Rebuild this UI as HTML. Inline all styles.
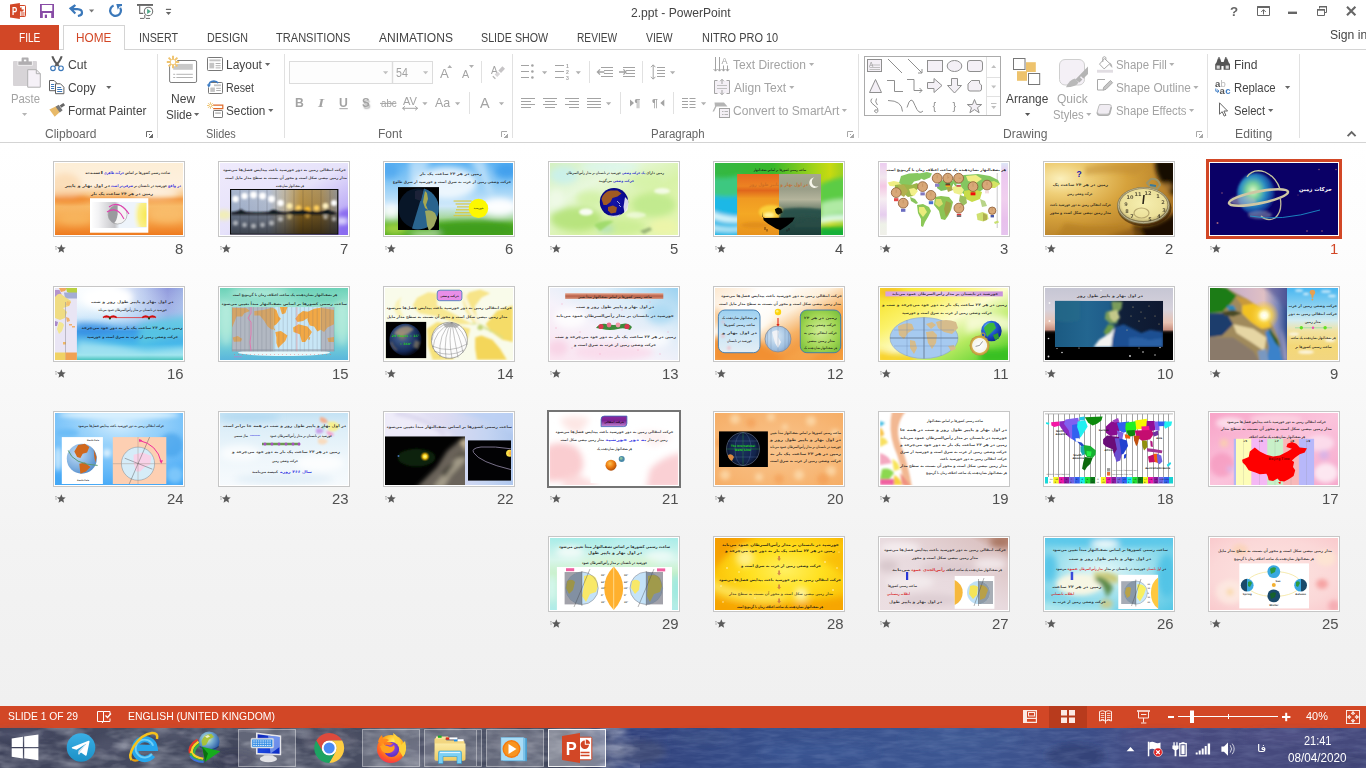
<!DOCTYPE html>
<html lang="en">
<head>
<meta charset="utf-8">
<title>2.ppt - PowerPoint</title>
<style>
html,body{margin:0;padding:0;width:1366px;height:768px;overflow:hidden;background:#fff}
body{position:relative;font-family:"Liberation Sans",sans-serif;color:#444}
#titlebar{position:absolute;left:0;top:0;width:1366px;height:25px;background:#fff}
#tabs{position:absolute;left:0;top:25px;width:1366px;height:25px;background:#fff}
#tabs .line{position:absolute;left:0;top:24px;width:1366px;height:1px;background:#d4d4d4}
#filetab{position:absolute;left:0;top:0;width:59px;height:25px;background:#d24726}
#hometab{position:absolute;left:63px;top:0;width:60px;height:25px;background:#fff;border:1px solid #d4d4d4;border-bottom:none}
#ribbon{position:absolute;left:0;top:50px;width:1366px;height:92px;background:#fff;border-bottom:1px solid #d4d4d4}
#sorter{position:absolute;left:0;top:143px;width:1366px;height:563px;background:linear-gradient(#fff 0,#fdfdfd 100px,#f8f8f8 250px,#f3f3f3 400px,#f0f0f0 563px)}
#status{position:absolute;left:0;top:706px;width:1366px;height:22px;background:#d24726}
#taskbar{position:absolute;left:0;top:728px;width:1366px;height:40px;background:#3a3d5e;overflow:hidden}
.t{position:absolute;white-space:nowrap;line-height:1;transform-origin:0 0;display:block}
svg{position:absolute;left:0;top:0;overflow:visible}
.th{position:absolute;width:130px;height:74px;border:1px solid #c6c6c6;background:#fff}
.th svg{left:1px;top:1px;overflow:hidden}
.th.hov{border:2px solid #747474;margin:-1px 0 0 -1px}
.th.sel{border:3px solid #d24726;margin:-2px 0 0 -2px}
</style>
</head>
<body>
<div id="titlebar"></div>
<div id="tabs"><div class="line"></div><div id="filetab"></div><div id="hometab"></div></div>
<div id="ribbon"></div>
<div id="sorter"></div>
<div id="status"></div>
<div id="taskbar"></div>

<svg id="chrome-top" style="will-change:transform" width="1366" height="143" viewBox="0 0 1366 143" font-family="Liberation Sans, sans-serif">
<defs>
<path id="dd" d="M0 0h5.2l-2.6 3z"/>
<g id="dlg"><path d="M0.5 6V0.5H6" fill="none" stroke-width="1"/><path d="M3 3h1v1H3zM6 3h1v4H3V6h1V5h1V4h1z" stroke="none"/></g>
</defs>
<!-- ===== quick access toolbar ===== -->
<g id="ic-ppt">
<path d="M19.400 5.500h5.400q.7 0 .7.700v9.600q0 .7-.7.700h-5.400z" fill="#fff" stroke="#d24726" stroke-width="1"/>
<path d="M10 4.400L19.900 2.900v16L10 17.600z" fill="#d24726"/>
<path d="M21.600 7.200a2.300 2.300 0 1 0 2.300 2.300h-2.300z" fill="#d24726"/>
<path d="M20.600 13h4M20.600 15h4" stroke="#d24726" stroke-width="1"/>
<text x="12.100" y="14.600" font-size="10.400" font-weight="bold" fill="#fff" textLength="5.200" lengthAdjust="spacingAndGlyphs">P</text>
</g>
<g id="ic-save">
<path d="M40 4h14v14H40z" fill="#884ca6"/>
<path d="M41.800 5h10.500v6H41.800z" fill="#fff"/>
<path d="M42.800 13h8.400v5h-8.400z" fill="#fff"/>
<path d="M44.800 14.600h2.200V18h-2.200z" fill="#884ca6"/>
</g>
<g id="ic-undo">
<path d="M74.600 4.300l1.500 1.500-2.400 2.300h3.800q5.600.3 5.600 4.600 0 3.700-5 4.300l-.4-2.100q3.200-.5 3.200-2.300 0-2.200-3.500-2.300h-3.700l2.400 2.400-1.500 1.500-5.800-5.900z" fill="#3b78ba"/>
</g>
<use href="#dd" x="89" y="9.4" fill="#777"/>
<g id="ic-redo"><path d="M113.600 5.500A5.400 5.400 0 1 0 120.200 7.800" fill="none" stroke="#3b78ba" stroke-width="2.200"/><path d="M116.300 4h5.700v2l-2.400.4-1.800 3.400z" fill="#3b78ba"/></g>
<g id="ic-show">
<path d="M137 4h16v1.900h-16z" fill="#666"/>
<path d="M139.700 5.500v7.900h3.600" fill="none" stroke="#666" stroke-width="1.100"/>
<path d="M144.800 15v3.400M140 18.400h4M146 18.400h4" stroke="#666" stroke-width="1"/>
<circle cx="148.500" cy="11.400" r="4.200" fill="#fff" stroke="#777" stroke-width="1.100"/>
<path d="M147.100 8.800l3.900 2.600-3.900 2.600z" fill="#4fa888"/>
</g>
<g id="ic-qat" fill="#666"><path d="M165.900 8.800h5.200v1.200h-5.200z"/><path d="M165.900 12h5.200l-2.600 3z"/></g>
<!-- ===== window controls ===== -->
<g id="ic-win" fill="none" stroke="#666">
<path d="M1257.5 6.5h12v9h-12z" stroke-width="1"/><path d="M1257 7.2h13" stroke-width="1.6"/>
<path d="M1263.5 14.5V9.8M1261.2 12l2.3-2.3 2.3 2.3" stroke-width="1"/>
<path d="M1288 12.8h9" stroke-width="2.4"/>
<path d="M1319.5 8.5v-2h7v6h-2" stroke-width="1"/><path d="M1319 6.8h8" stroke-width="1.4"/>
<path d="M1317.5 9.5h7v6h-7z" stroke-width="1"/><path d="M1317 9.9h8" stroke-width="1.6"/>
<path d="M1347 6.8l8.4 8.4M1355.4 6.8l-8.4 8.4" stroke-width="2.1"/>
</g>
<!-- ===== group separators ===== -->
<g fill="#e1e1e1">
<rect x="157" y="54" width="1" height="84"/><rect x="284" y="54" width="1" height="84"/>
<rect x="512" y="54" width="1" height="84"/><rect x="858" y="54" width="1" height="84"/>
<rect x="1207" y="54" width="1" height="84"/><rect x="1299" y="54" width="1" height="84"/>
<rect x="481" y="61" width="1" height="22"/><rect x="589" y="61" width="1" height="22"/><rect x="642" y="61" width="1" height="22"/>
<rect x="469" y="92" width="1" height="22"/><rect x="620" y="92" width="1" height="22"/><rect x="673" y="92" width="1" height="22"/>
</g>
<use href="#dlg" x="146" y="131" fill="#6a6a6a" stroke="#6a6a6a"/><use href="#dlg" x="501" y="131" fill="#a8a8a8" stroke="#a8a8a8"/><use href="#dlg" x="847" y="131" fill="#a8a8a8" stroke="#a8a8a8"/><use href="#dlg" x="1196" y="131" fill="#a8a8a8" stroke="#a8a8a8"/>
<path d="M1347.6 136.2l4-4 4 4" fill="none" stroke="#666" stroke-width="1.9"/>
<!-- ===== clipboard ===== -->
<g id="ic-paste">
<path d="M14 61h22q1 0 1 1v23q0 1-1 1H14q-1 0-1-1V62q0-1 1-1z" fill="#d7d4d7"/>
<path d="M17.600 61h15v4.600h-15z" fill="#fff"/>
<path d="M18.300 61.400h13.600v3.500H18.300z" fill="#b0aeb0"/><path d="M21.600 58.400q0-.8.800-.8h5.400q.8 0 .8.800v3.600h-7z" fill="#b0aeb0"/><path d="M23.900 59.600h2.400v1.700h-2.400z" fill="#fff"/>
<path d="M27.700 69.700h8.600l4 4v13.500H27.700z" fill="#f5f1f7" stroke="#b0b0b0" stroke-width="1"/>
<path d="M36.300 69.700v4h4" fill="none" stroke="#b0b0b0" stroke-width="1"/>
</g>
<use href="#dd" x="22" y="113" fill="#b5b5b5"/>
<g id="ic-cut">
<path d="M52.300 56.300q2 6 6.600 9.800M61.700 56.300q-2 6-6.600 9.800" fill="none" stroke="#5a5a5a" stroke-width="2"/>
<circle cx="53" cy="68.300" r="2.300" fill="#fff" stroke="#3b78ba" stroke-width="1.200"/>
<circle cx="61" cy="68.300" r="2.300" fill="#fff" stroke="#3b78ba" stroke-width="1.200"/>
</g>
<g id="ic-copy">
<path d="M49.500 80.500h4.600l2.600 2.600v7.600h-7.200z" fill="#fff" stroke="#5e5e5e" stroke-width="1"/>
<path d="M51 84.500h3.200M51 86.500h3.200M51 88.500h3.200" stroke="#3b78ba" stroke-width="1"/>
<path d="M55.500 83.800h5l3.400 3.400v6.500h-8.400z" fill="#fff" stroke="#5e5e5e" stroke-width="1"/>
<path d="M57.200 87.500h4M57.200 89.500h5M57.200 91.500h5" stroke="#3b78ba" stroke-width="1"/>
</g>
<use href="#dd" x="106.2" y="86" fill="#666"/>
<g id="ic-fpaint">
<path d="M49.4 109.4l7.3-3.3 3.4 5.6-5.4 5z" fill="#e8b968"/>
<path d="M55.6 106.8l3-2 4 5.4-2.8 2.2z" fill="#777"/>
<path d="M59.6 105.4l3.8-2.4 1.7 2.3-3.7 2.5z" fill="#666"/>
</g>
<!-- ===== slides ===== -->
<g id="ic-newslide">
<rect x="169.600" y="60.500" width="27" height="22" rx="1.500" fill="#fff" stroke="#7d7d7d" stroke-width="1"/>
<path d="M173.200 63.900h19.600v5.900h-19.600z" fill="#c8c8c8"/>
<path d="M173.200 74.300h2M176.400 74.300h16.400M173.200 77.500h2M176.400 77.500h16.400" stroke="#b4b4b4" stroke-width="1"/>
<circle cx="173" cy="62" r="4.600" fill="#fff"/>
<path d="M173 55.800v12.400M166.800 62h12.400M168.600 57.600l8.800 8.800M177.400 57.600l-8.800 8.800" stroke="#efc36e" stroke-width="1.900"/>
<circle cx="173" cy="62" r="2.300" fill="#fff"/>
</g>
<use href="#dd" x="194" y="113" fill="#666"/>
<g id="ic-layout">
<rect x="207.5" y="57.5" width="15" height="13" rx="0.8" fill="#fff" stroke="#777" stroke-width="1"/>
<path d="M209.4 59.4h11.2v1.9h-11.2z" fill="#c4c4c4"/><path d="M209.4 62.8h4.8v5.6h-4.8z" fill="#c4c4c4"/>
<path d="M215.6 63.5h5M215.6 65.7h5M215.6 67.9h5" stroke="#b0b0b0" stroke-width="1"/>
</g>
<use href="#dd" x="265" y="63" fill="#666"/>
<g id="ic-reset">
<rect x="208.5" y="82.5" width="14" height="11" rx="0.8" fill="#fff" stroke="#777" stroke-width="1"/>
<path d="M214 84.4h7v1.8h-7z" fill="#c4c4c4"/><path d="M210.3 87.5h4.6v4.4h-4.6z" fill="#c4c4c4"/>
<path d="M216.2 88.3h4.6M216.2 90.5h4.6" stroke="#b0b0b0" stroke-width="1"/>
<path d="M206.6 80.4h4.4v7h-4.4z" fill="#fff"/>
<path d="M208.6 86.2q.4-5 5.3-5.2 3 0 4.3 2.2" fill="none" stroke="#3d7cc4" stroke-width="1.6"/>
<path d="M206.8 84.4h4.2l-2.2 3z" fill="#3d7cc4"/>
</g>
<g id="ic-section">
<path d="M213 105.200h9.800v3.500h-9.600" fill="none" stroke="#e06a28" stroke-width="1.200"/>
<circle cx="210.400" cy="105.500" r="2.400" fill="#fff"/>
<path d="M210.400 102.200v6.600M207.100 105.500h6.600M208.100 103.200l4.600 4.600M212.700 103.200l-4.600 4.600" stroke="#efc36e" stroke-width="1"/>
<circle cx="210.400" cy="105.500" r="1.100" fill="#fff"/>
<rect x="213.500" y="110.500" width="9" height="7" rx="0.600" fill="#fff" stroke="#777" stroke-width="1"/>
<path d="M215.200 112.200h5.600v1.800h-5.600z" fill="#c4c4c4"/>
</g>
<use href="#dd" x="268.2" y="109" fill="#666"/>
<!-- ===== font ===== -->
<g id="font-boxes">
<rect x="289.5" y="61.5" width="143" height="22" fill="#fdfdfd" stroke="#dcdcdc" stroke-width="1"/>
<path d="M392.5 61.5v22" stroke="#dcdcdc" stroke-width="1.4"/>
<use href="#dd" x="383" y="71.3" fill="#c0c0c0"/><use href="#dd" x="423" y="71.3" fill="#c0c0c0"/>
</g>
<g fill="#b0b0b0">
<path d="M447.3 68l2.4-3 2.4 3z"/><path d="M469 65h5l-2.5 3z"/>
<use href="#dd" x="422.3" y="102.3"/><use href="#dd" x="455" y="102.3"/><use href="#dd" x="498.9" y="102.3"/>
<use href="#dd" x="542" y="71.3"/><use href="#dd" x="575.7" y="71.3"/><use href="#dd" x="670" y="71.3"/>
<use href="#dd" x="606" y="102.3"/><use href="#dd" x="701" y="102.3"/>
<use href="#dd" x="809" y="63"/><use href="#dd" x="789.2" y="86"/><use href="#dd" x="841.8" y="109"/>
<use href="#dd" x="1086.2" y="113"/><use href="#dd" x="1169.2" y="63"/><use href="#dd" x="1193.3" y="86"/><use href="#dd" x="1189" y="109"/>
</g>
<g stroke="#a3a3a3" fill="none">
<path d="M339.4 108.7h8.4" stroke-width="1"/>
<path d="M380 103.4h16.4" stroke-width="1"/>
<path d="M402.6 108.3h15M405 106.3l-2.4 2 2.4 2M415.2 106.3l2.4 2-2.4 2" stroke-width="1"/>
</g>
<g id="ic-clear">
<text x="491" y="73.5" font-size="10" fill="#a3a3a3">A</text>
<path d="M498.4 70.6l4-4.3 2.6 2.5-4 4.3z" fill="#c6c4c6"/><path d="M494.6 74.6l3-3.2 2.6 2.5-3 3.2z" fill="#d8d6d8"/><path d="M492.8 76.2l2.6 2.5" stroke="#b5b5b5" stroke-width="1.2"/>
</g>
<!-- ===== paragraph ===== -->
<g stroke="#a3a3a3" stroke-width="1" fill="none">
<path d="M521 65.5h8M521 71.5h8M521 77.5h8"/>
<path d="M555 65.5h9M555 71.5h9M555 77.5h9"/>
<path d="M601 67.5h12M604 70.5h9M604 73.5h9M601 76.5h12"/>
<path d="M597.4 72h7M600 69.4L597.4 72l2.6 2.6" stroke-width="1.3"/>
<path d="M623 67.5h12M626 70.5h9M626 73.5h9M623 76.5h12"/>
<path d="M619 72h7M623.4 69.4L626 72l-2.6 2.6" stroke-width="1.3"/>
<path d="M657 67.5h8M657 70.5h8M657 73.5h8M657 76.5h8"/>
<path d="M653.2 65v14M651 67.2l2.2-2.4 2.2 2.4M651 76.8l2.2 2.4 2.2-2.4"/>
<path d="M521 98.5h14M521 101.5h10M521 104.5h14M521 107.5h10"/>
<path d="M543 98.5h14M545 101.5h10M543 104.5h14M545 107.5h10"/>
<path d="M565 98.5h14M569 101.5h10M565 104.5h14M569 107.5h10"/>
<path d="M587 98.5h14M587 101.5h14M587 104.5h14M587 107.5h14"/>
<path d="M682 98.5h6M682 101.5h6M682 104.5h6M682 107.5h6M689.5 98.5h6M689.5 101.5h6M689.5 104.5h6M689.5 107.5h6"/>
</g>
<g fill="#a3a3a3">
<circle cx="532.4" cy="65.5" r="1.3"/><circle cx="532.4" cy="71.5" r="1.3"/><circle cx="532.4" cy="77.5" r="1.3"/>
<text x="566" y="67.6" font-size="5.2" font-weight="bold">1</text><text x="566" y="73.6" font-size="5.2" font-weight="bold">2</text><text x="566" y="79.6" font-size="5.2" font-weight="bold">3</text>
<path d="M630 99.4l4 3.6-4 3.6z"/><path d="M664.3 99.4l-4 3.6 4 3.6z"/>
<text x="634.6" y="106.6" font-size="10.5" font-weight="bold">¶</text>
<text x="652" y="106.6" font-size="10.5" font-weight="bold">¶</text>
</g>
<g id="ic-textdir" stroke="#a3a3a3" fill="none" stroke-width="1">
<path d="M715.5 57v14M719.5 57v14M713.6 69l1.9 2.2 1.9-2.2M717.6 69l1.9 2.2 1.9-2.2"/>
<path d="M723.5 65.5v5.500M727.5 65.500v5.500M721.800 69l1.700 2.200 1.700-2.200M725.800 69l1.700 2.200 1.700-2.200"/>
<text x="721.4" y="63.6" font-size="9" fill="#a3a3a3" stroke="none">A</text>
</g>
<g id="ic-aligntext" stroke="#a3a3a3" fill="none" stroke-width="1">
<path d="M714.5 80.500h15v13h-15z" fill="#f4f0f6" stroke="none"/>
<path d="M717.500 80.500h-3v13h3M726.500 80.500h3v13h-3"/>
<path d="M717 85.500h10M717 88.500h10" stroke="#c0c0c0"/>
<path d="M722 79.400v4.600M720.200 81.200l1.800-1.900 1.800 1.900M722 94.600v-4.600M720.200 92.800l1.800 1.900 1.800-1.900"/>
</g>
<g id="ic-smartart">
<path d="M714.500 102.500h9.500l3.500 4h-11l-2.500 5h-1.500l2.500-5z" fill="#b4b4b4"/>
<rect x="719.500" y="108.500" width="10" height="9" fill="#f4f0f6" stroke="#a3a3a3" stroke-width="1"/>
<path d="M722 111.500h1.500M724.500 111.500h3.500M722 114.500h1.500M724.500 114.500h3.500" stroke="#b5b5b5" stroke-width="1"/>
</g>
<!-- ===== drawing: shapes gallery ===== -->
<g id="gallery">
<rect x="864.500" y="56.500" width="136" height="59" fill="#fff" stroke="#ababab" stroke-width="1"/>
<path d="M986.500 57v58M987 77.500h13M987 96.500h13" stroke="#e1e1e1" stroke-width="1" fill="none"/>
<path d="M991.200 68l2.500-3 2.500 3z" fill="#c0c0c0"/><path d="M991.200 85.500h5l-2.500 3z" fill="#c0c0c0"/>
<path d="M991 103.500h5.500" stroke="#c0c0c0" stroke-width="1"/><path d="M991.200 106h5l-2.500 3z" fill="#c0c0c0"/>
<g fill="#f4f0f6" stroke="#8f8f8f" stroke-width="1">
<rect x="867.500" y="59.500" width="14" height="12"/>
<rect x="927.500" y="60.500" width="15" height="11"/>
<ellipse cx="954.500" cy="66" rx="7.300" ry="5.500"/>
<rect x="967.500" y="60.500" width="15" height="11" rx="2.500"/>
<path d="M875.500 79.500l6 13h-12z"/>
<path d="M927.500 82.500h6.500v-4l8 7-8 7v-4h-6.500z"/>
<path d="M951.500 78.500h6v7h4l-7 7.500-7-7.500h4z"/>
<path d="M971.500 80.500h8q-1 3.500 2 4.500v4q0 2-2 2h-9.500q-2 0-2-2v-5z"/>
<path d="M974.500 99.500l2 5h5.200l-4.200 3.200 1.600 5-4.600-3.100-4.600 3.100 1.600-5-4.200-3.200h5.200z"/>
</g>
<g fill="none" stroke="#8f8f8f" stroke-width="1">
<path d="M888 59l14 14"/>
<path d="M908 59l14 14M922 69v4h-4"/>
<path d="M887 80.500h7.500v11h8.500"/>
<path d="M907 79.500h7v11h8M919.500 88l2.500 2.500-2.500 2.500"/>
<path d="M872 98.500q-3 3 2 6.500 5 3 4 6.500-1.500 2.500-3.500 0 0-2.500 2.500-1.500M877.500 105q-3-3-1-6.500"/>
<path d="M888 100.500q14 0 14.500 11"/>
<path d="M907 107.500q4-14 8-2 4 10 8 5.500"/>
<path d="M871.500 65h8.500M869.500 67.500h10.500M869.500 69.500h10.500" stroke="#c0c0c0"/>
</g>
<g fill="#8f8f8f" font-size="11">
<text x="932.600" y="109.500">{</text><text x="952.600" y="109.500">}</text>
<text x="869" y="66.500" font-size="6.500" fill="#a0a0a0">A</text>
</g>
</g>
<!-- arrange -->
<g id="ic-arrange">
<path d="M1026 62.200h9.800v9.800h-9.800z" fill="#eec36d"/><path d="M1017 71.200h10v9.600h-10z" fill="#eec36d"/>
<rect x="1013.500" y="58.500" width="11.500" height="11" fill="#fff" stroke="#777" stroke-width="1"/>
<rect x="1028.500" y="73.500" width="11.200" height="11" fill="#fff" stroke="#777" stroke-width="1"/>
</g>
<use href="#dd" x="1025" y="113" fill="#555"/>
<g id="ic-quick">
<rect x="1059.500" y="59.500" width="25" height="25.500" rx="5.500" fill="#f4f0f6" stroke="#cfcfcf" stroke-width="1"/>
<path d="M1088 66.500v7.500l-8.600 8.600-4-3z" fill="#b4b4b4"/>
<path d="M1080.500 76.800l3 3" stroke="#f4f0f6" stroke-width="1.400"/>
<path d="M1066 87.200q3.500-7.500 9-8.600l3.600 3.800q-3 4.800-12.600 4.800z" fill="#b9b9b9"/>
</g>
<g id="ic-sfill">
<path d="M1097 69.800h16v2.900h-16z" fill="#e1dde2"/>
<path d="M1104.500 58.600l5.400 5-5.800 5.300-4.600-4.800z" fill="#fff" stroke="#a8a8a8" stroke-width="1"/>
<path d="M1102.800 62v-4.500q1.600-1.700 3.100 0v2.300" fill="none" stroke="#a8a8a8" stroke-width="1"/>
<path d="M1109.500 62.500q3 1 2.800 5.500-1.600-1.500-2.800-3z" fill="#b5b5b5"/>
</g>
<g id="ic-soutline" fill="none" stroke="#a8a8a8" stroke-width="1">
<path d="M1105 79.500h-7.500v10.500h5"/>
<path d="M1102.800 90.300l1-3.200 6.600-6.600 2.200 2.200-6.600 6.600z" fill="#c6c6c6"/>
</g>
<g id="ic-seffects">
<path d="M1099.600 104.500h9.400q2.600 0 2.300 2.300l-1.800 5.600q-.6 1.800-2.500 1.800h-8.500q-2 0-1.300-2.100l1.600-6q.5-1.600 2.300-1.600z" fill="#f0ecf2" stroke="#bdbdbd" stroke-width="1"/>
<path d="M1097.400 112.400q0 2.800 2.600 2.800h7q2.600-.2 3-2.600l1.400-5.500" fill="none" stroke="#b0b0b0" stroke-width="1.500"/>
</g>
<!-- ===== editing ===== -->
<g id="ic-find" fill="#555">
<path d="M1216.600 62.200l1.200-3.800h2.400l1.200 3.800v7.600h-6.200v-5.600z"/>
<path d="M1223.600 62.200l1.200-3.800h2.400l1.400 3.800 1.400 2v5.600h-6.400z"/>
<path d="M1221 62h3v4h-3z"/>
<path d="M1216.600 65.600h3.200v3.200h-3.200zM1225.600 65.600h3.200v3.200h-3.200z" fill="#d9d9d9"/>
<path d="M1218.200 57.300h1.600v1.500h-1.600zM1225 57.300h1.600v1.500h-1.600z"/>
</g>
<g id="ic-replace" font-size="9.500" font-weight="bold">
<text x="1215" y="86.800" fill="#555">a</text><text x="1220.600" y="86.800" fill="#b5b5b5" font-weight="normal">b</text>
<text x="1219.600" y="94.200" fill="#555">a</text><text x="1225.200" y="94.200" fill="#3d7cc4">c</text>
<path d="M1215.800 88.500v2.700h3M1217.300 89.600l1.700 1.600-1.700 1.600" fill="none" stroke="#3d7cc4" stroke-width="1"/>
</g>
<use href="#dd" x="1285" y="86" fill="#666"/><use href="#dd" x="1268.100" y="109" fill="#666"/>
<path id="ic-select" d="M1219.500 102.800v11.400l2.700-2.500 2 4.400 1.700-.8-2-4.300h3.700z" fill="#fff" stroke="#666" stroke-width="1"/>
</svg>

<svg width="0" height="0" style="position:absolute"><defs>
<filter id="bl04" x="-10%" y="-10%" width="120%" height="120%"><feGaussianBlur stdDeviation="0.4"/></filter>
<filter id="bl06" x="-10%" y="-10%" width="120%" height="120%"><feGaussianBlur stdDeviation="0.6"/></filter>
<filter id="bl12" x="-20%" y="-20%" width="140%" height="140%"><feGaussianBlur stdDeviation="1.2"/></filter>
<filter id="bl2" x="-30%" y="-30%" width="160%" height="160%"><feGaussianBlur stdDeviation="2"/></filter>
<filter id="bl3" x="-40%" y="-40%" width="180%" height="180%"><feGaussianBlur stdDeviation="3"/></filter>
<path id="star" d="M5 0l1.250 2.950 3.150.27-2.400 2.050.8 3.130L5 6.700 2.200 8.400l.8-3.130L.600 3.220l3.150-.27z"/>
</defs></svg>
<div class="th sel" id="slide1" style="left:1208px;top:161px"><svg width="128" height="72" viewBox="0 0 128 72" font-family="DejaVu Sans, Liberation Sans, sans-serif"><defs><radialGradient id="g1a" cx=".42" cy=".42" r=".6"><stop offset="0" stop-color="#e4f8c8"/><stop offset=".28" stop-color="#7fd49a"/><stop offset=".55" stop-color="#2a8fc4"/><stop offset=".85" stop-color="#14409c"/><stop offset="1" stop-color="#0a0a70"/></radialGradient></defs>
<rect width="128" height="72" fill="#0a0066"/>
<g fill="#a0607a"><circle cx="7.500" cy="60" r="1"/><circle cx="12" cy="30" r=".7"/><circle cx="109" cy="6.500" r=".7"/><circle cx="126" cy="6.500" r=".7"/><circle cx="97" cy="68" r=".8"/><circle cx="112" cy="68" r=".8"/><circle cx="88" cy="32" r=".5"/></g>
<g filter="url(#bl12)"><ellipse cx="46" cy="31" rx="19" ry="21" fill="url(#g1a)"/>
<ellipse cx="33" cy="38" rx="13" ry="5" fill="#b8b8c8" fill-opacity=".55"/>
<ellipse cx="50" cy="52" rx="12" ry="4" fill="#9aa8b8" fill-opacity=".5"/></g>
<g filter="url(#bl06)" fill="none">
<ellipse cx="48.500" cy="34.500" rx="30" ry="6" transform="rotate(-11 48.500 34.500)" stroke="#cfc7a4" stroke-width="2.600"/>
<path d="M37 14q6-9 18-5 11 5 15 17" stroke="#c3c79e" stroke-width="1.300"/>
<path d="M70 34q3 14-5 21-8 4-14-2" stroke="#bdb79a" stroke-width="1.300"/>
</g>
<path d="M40 53q30 6 70-6" fill="none" stroke="#1ea0d2" stroke-width=".9" stroke-opacity=".9"/>
<text x="105.4" y="28.0" text-anchor="middle" direction="rtl" font-size="5.16" fill="#fff" fill-opacity="1" textLength="32.8" lengthAdjust="spacingAndGlyphs" font-weight="bold">حرکات زمین</text></svg></div>
<svg class="star" width="12" height="11" style="left:1209.5px;top:244px"><use href="#star" x="1.3" y="0.3" fill="#5a5a5a"/><path d="M.2 2.800h1.500M.4 5h1.300" stroke="#777" stroke-width=".8"/></svg>
<div class="th" id="slide2" style="left:1043px;top:161px"><svg width="128" height="72" viewBox="0 0 128 72" font-family="DejaVu Sans, Liberation Sans, sans-serif"><defs><radialGradient id="g2a" cx=".12" cy=".22" r="1.05"><stop offset="0" stop-color="#fbf0bc"/><stop offset=".2" stop-color="#efcf78"/><stop offset=".5" stop-color="#d6a23c"/><stop offset=".8" stop-color="#b8822a"/><stop offset="1" stop-color="#946018"/></radialGradient>
<radialGradient id="g2b" cx=".5" cy=".45" r=".6"><stop offset="0" stop-color="#f6efb0"/><stop offset=".75" stop-color="#ece09a"/><stop offset="1" stop-color="#b8a868"/></radialGradient></defs>
<rect width="128" height="72" fill="url(#g2a)"/>
<g filter="url(#bl2)"><path d="M20 60q30 6 60 2l10 14H10z" fill="#b07a22" fill-opacity=".6"/><path d="M40 4q30-6 60 0l-10 8q-20-4-50 0z" fill="#c08c30" fill-opacity=".5"/><path d="M110 -3h22v36q-10-3-14-12-8-8-8-24z" fill="#140a02"/>
<path d="M88 62q20 6 44-14v28H90z" fill="#1c0f03"/>
<path d="M60 74q20-6 34-10l6 12z" fill="#8a5a18" fill-opacity=".7"/>
<ellipse cx="122" cy="24" rx="5" ry="4" fill="#c08a3a" fill-opacity=".8"/></g>
<g filter="url(#bl06)"><ellipse cx="99.500" cy="45" rx="27" ry="18.500" fill="#2a1a08" fill-opacity=".55"/><ellipse cx="98.500" cy="42.500" rx="26.500" ry="18.500" fill="#857a52"/><ellipse cx="98.500" cy="42.300" rx="25.200" ry="17.300" fill="none" stroke="#c8c0a0" stroke-width=".8"/>
<ellipse cx="98.500" cy="42" rx="24" ry="16" fill="url(#g2b)"/>
<ellipse cx="96.500" cy="50" rx="7.500" ry="5" fill="none" stroke="#b9a970" stroke-width="1.200"/>
<path d="M106 16q7-1 9 6l-3 4q-8-2-10-6z" fill="none" stroke="#9c9468" stroke-width="2"/>
<path d="M105 22l6 1" stroke="#3a7a9a" stroke-width="2"/>
<path d="M98 41l1-9" stroke="#2a2418" stroke-width="1.600"/></g>
<g fill="#3b3424" font-size="5" font-weight="bold" fill-opacity=".8" text-anchor="middle" filter="url(#bl04)"><text x="93" y="33">11</text><text x="103" y="32">12</text><text x="113" y="35">1</text><text x="118" y="41">2</text><text x="119" y="49">3</text><text x="114" y="55">4</text><text x="85" y="36">10</text><text x="81" y="43">9</text><text x="82" y="50">8</text><text x="87" y="55">7</text><text x="105" y="58">5</text></g>
<text x="31.400" y="13.600" font-size="8.500" font-weight="bold" fill="#1a14b4" font-family="Liberation Sans, sans-serif">?</text>
<text x="35.4" y="23.2" text-anchor="middle" direction="rtl" font-size="3.96" fill="#141414" fill-opacity="0.82" textLength="55.4" lengthAdjust="spacingAndGlyphs" font-weight="bold">زمین در هر ۲۴ ساعت یک</text><text x="34.8" y="31.9" text-anchor="middle" direction="rtl" font-size="3.96" fill="#141414" fill-opacity="0.82" textLength="25.6" lengthAdjust="spacingAndGlyphs" font-weight="bold">حرکت وضعی زمین</text><text x="35.5" y="42.6" text-anchor="middle" direction="rtl" font-size="3.96" fill="#141414" fill-opacity="0.82" textLength="61.0" lengthAdjust="spacingAndGlyphs" font-weight="bold">حرکت انتقالی زمین به دور خورشید باعث</text><text x="35.5" y="50.8" text-anchor="middle" direction="rtl" font-size="3.96" fill="#141414" fill-opacity="0.82" textLength="61.0" lengthAdjust="spacingAndGlyphs" font-weight="bold">مدار زمین بیضی شکل است و محور</text></svg></div>
<svg class="star" width="12" height="11" style="left:1044.5px;top:244px"><use href="#star" x="1.3" y="0.3" fill="#5a5a5a"/><path d="M.2 2.800h1.500M.4 5h1.300" stroke="#777" stroke-width=".8"/></svg>
<div class="th" id="slide3" style="left:878px;top:161px"><svg width="128" height="72" viewBox="0 0 128 72" font-family="DejaVu Sans, Liberation Sans, sans-serif"><defs><linearGradient id="g3a" x1="0" y1="0" x2="0" y2="1"><stop offset="0" stop-color="#eccdf0"/><stop offset=".2" stop-color="#f2e6ee"/><stop offset=".32" stop-color="#f4c8e4"/><stop offset=".5" stop-color="#f6eef2"/><stop offset=".72" stop-color="#e6cdee"/><stop offset=".85" stop-color="#eef2e8"/><stop offset="1" stop-color="#f0f0ea"/></linearGradient>
<linearGradient id="g3b" x1="0" y1="0" x2="0" y2="1"><stop offset="0" stop-color="#dde6f6"/><stop offset=".15" stop-color="#ecc8f0"/><stop offset=".5" stop-color="#f0d0ee"/><stop offset=".8" stop-color="#e8c0ec"/><stop offset="1" stop-color="#e6c4ee"/></linearGradient></defs>
<rect width="128" height="72" fill="#fff"/><rect width="6.800" height="72" fill="url(#g3a)"/><rect x="121.200" width="6.800" height="72" fill="url(#g3b)"/>
<path d="M117.300 10v55" stroke="#d8d8d8" stroke-width="1.400"/>
<g filter="url(#bl06)">
<path d="M7.700 19.500l6-1.500 5 1 2 3-5 1.500-6-.5z" fill="#f0ee84"/>
<path d="M21 13l8-2.500 9-.5 5 3-3 4-6 1.500-3 4-7 .5-5-3z" fill="#86c860"/>
<path d="M15 22l8-1 8 1 6-2 3 3-4 5-3 5-5 1-4-3-5-1-4-4z" fill="#9cb648"/>
<path d="M18 22l6 0 4 6-4 6-5-3z" fill="#b2b050"/>
<path d="M29 26l5-1 4 3-4 5-3-1z" fill="#f2f08a"/>
<path d="M30 34l5 2 3 4-2 1-5-3z" fill="#88c45c"/>
<path d="M39 10.500l8-1.500 5 1.500-2 4-6 2.500-5-2.500z" fill="#84c862"/>
<path d="M37 42l6-1 6 3 2 4-3 6-3 5-2 5-2-1 0-7-3-6z" fill="#8cc858"/><path d="M39 44l5 0 3 5-4 5-4-5z" fill="#eaec7c"/>
<path d="M58 20l5-3 6-1 5 3-2 5-6 3-5 1-4-3z" fill="#7cc05c"/><path d="M66 23l5-1 2 5-5 2z" fill="#a8a848"/>
<path d="M55 34l6-1 8 1 4 5-2 8-3 6-3 4-4-1-2-8-5-6z" fill="#8cc454"/><path d="M56 36l5 0 2 5-4 3-4-3z" fill="#d8dc6c"/><path d="M66 38l5 2-1 8-4 6-2-8z" fill="#a0a044"/>
<path d="M74 15l10-3 14-1 12 2 8 4 2 4-6 2-6-1-6 5-6 5-8 1-6-3-6-6-4-5z" fill="#84c660"/>
<path d="M86 13l10-1 6 4-6 4-8-2z" fill="#f0ee84"/><path d="M72 24l8-2 4 5-3 5-7-2z" fill="#eef08c"/>
<path d="M84 28l10-2 8 3-2 7-8 3-8-4z" fill="#c8dc48"/>
<path d="M80 32l6 2 1 6-4 3-4-5z" fill="#9cc060"/><path d="M100 36l5 2 2 5-5 1z" fill="#b8d488"/>
<path d="M106 20l8-2 6 3-5 4-7 0z" fill="#d4e464"/>
<path d="M96.500 51l6-2 5 2 1 5-5 2.500-6-1.500z" fill="#cfe070"/><path d="M103 50l4 2 0 5-4 1z" fill="#b0b050"/>
<path d="M114 59l4-1.500 1 2-4 1.500z" fill="#c8e070"/>
</g>
<g fill="#d8a878" stroke="#8a5a34" stroke-width=".8"><circle cx="16.200" cy="29.600" r="4.900"/><circle cx="23.200" cy="40.200" r="4.900"/><circle cx="42.600" cy="23.600" r="4.900"/><circle cx="50.900" cy="32.400" r="4.900"/><circle cx="57.200" cy="15.200" r="4.900"/><circle cx="67.800" cy="15.200" r="4.900"/><circle cx="78.600" cy="15.200" r="4.900"/><circle cx="93" cy="23.600" r="4.900"/><circle cx="107" cy="22.100" r="4.900"/><circle cx="78.900" cy="45.100" r="4.900"/><circle cx="112.200" cy="47.700" r="3.700"/></g>
<g fill="none" stroke="#b07c4c" stroke-width=".5" stroke-opacity=".8"><path d="M16.200 26.500v3.300M23.200 37v3.300M42.600 20.500v3.300M50.900 29.300v3.300M57.200 12v3.300M67.800 12.200v3.200l1.500-1.500M78.600 15.200h2.600M93 20.400v3.300M107 19v3.200M78.900 45.100l2-1.500M112.200 45v2.700"/></g>
<g filter="url(#bl04)"><rect x="14" y="35.200" width="4.400" height="3" fill="#e44848"/><rect x="21" y="45.800" width="4.400" height="3" fill="#6a6cc0"/><rect x="40.400" y="29.400" width="4.400" height="3" fill="#8078c0"/><rect x="48.800" y="38.200" width="4.400" height="3" fill="#4a70d0"/><rect x="55" y="20.800" width="4.400" height="3" fill="#8a80c8"/><rect x="65.600" y="20.600" width="4.400" height="1.100" fill="#222"/><rect x="65.600" y="21.700" width="4.400" height="1" fill="#d82818"/><rect x="65.600" y="22.700" width="4.400" height="1" fill="#f0c020"/><rect x="76.400" y="20.800" width="4.400" height="1.500" fill="#e8e8f4"/><rect x="76.400" y="22.200" width="4.400" height="1.500" fill="#c83848"/><rect x="90.600" y="29.300" width="4.800" height="3" fill="#f01010"/><rect x="105" y="27.800" width="4" height="2.600" fill="#f4dede"/><rect x="76.800" y="50.800" width="4.400" height="1.500" fill="#e03838"/><rect x="76.800" y="52.300" width="4.400" height="1.500" fill="#505058"/><rect x="110.600" y="52" width="3.400" height="2.400" fill="#4a58a8"/></g>
<text x="66.3" y="7.5" text-anchor="middle" direction="rtl" font-size="3.78" fill="#141414" fill-opacity="0.9" textLength="119.4" lengthAdjust="spacingAndGlyphs" font-weight="bold">هر نصف‌النهار نشان‌دهنده یک ساعت اختلاف زمان با گرینویچ است</text></svg></div>
<svg class="star" width="12" height="11" style="left:879.5px;top:244px"><use href="#star" x="1.3" y="0.3" fill="#5a5a5a"/><path d="M.2 2.800h1.500M.4 5h1.300" stroke="#777" stroke-width=".8"/></svg>
<div class="th" id="slide4" style="left:713px;top:161px"><svg width="128" height="72" viewBox="0 0 128 72" font-family="DejaVu Sans, Liberation Sans, sans-serif"><defs><linearGradient id="g4a" x1="0" y1="0" x2="1" y2="0"><stop offset="0" stop-color="#34b844"/><stop offset=".45" stop-color="#38b82c"/><stop offset=".78" stop-color="#a4d418"/><stop offset=".9" stop-color="#c8da10"/><stop offset="1" stop-color="#9cd020"/></linearGradient>
<linearGradient id="g4b" x1="0" y1="0" x2="0" y2="1"><stop offset="0" stop-color="#e66a20"/><stop offset=".2" stop-color="#ec8222"/><stop offset=".27" stop-color="#e0661c"/><stop offset=".4" stop-color="#f09a22"/><stop offset=".65" stop-color="#f4a824"/><stop offset="1" stop-color="#e8921c"/></linearGradient>
<linearGradient id="g4c" x1="0" y1="0" x2="0" y2="1"><stop offset="0" stop-color="#a6a88e"/><stop offset=".25" stop-color="#9a9e88"/><stop offset=".42" stop-color="#b4b49c"/><stop offset=".55" stop-color="#7c8a76"/><stop offset=".62" stop-color="#2e544c"/><stop offset="1" stop-color="#1c3e3a"/></linearGradient></defs>
<rect width="128" height="72" fill="url(#g4a)"/>
<g filter="url(#bl2)"><path d="M-4 14q14 2 30-2v22q-14 6-30 2z" fill="#3cc880"/><path d="M-4 32q16 4 30 0v44H-4z" fill="#1cb8e6"/><path d="M-4 48q14 6 30 6v5q-16 2-30-4z" fill="#d8f6fc"/><path d="M-4 62q14 4 30 2v4q-16 2-30-1z" fill="#c8f0fa"/><path d="M104 22q14-8 28-8v40q-14 4-28 6z" fill="#5ccc44"/><path d="M106 40q12-4 26-4v14q-14 0-26 4z" fill="#b0eaa4"/><path d="M104 55q14-4 28-3v6q-14 0-28 3z" fill="#e0fae8"/><path d="M104 64h28v12h-28z" fill="#18b038"/></g>
<rect x="22.100" y="11" width="41.900" height="61" fill="url(#g4b)"/><rect x="64" y="11" width="42" height="61" fill="url(#g4c)"/>
<svg x="22.100" y="11" width="83.900" height="61" viewBox="22.100 11 83.900 61"><g filter="url(#bl12)"><ellipse cx="56" cy="49" rx="12" ry="7" fill="#fbd63c" fill-opacity=".85"/><ellipse cx="54" cy="52" rx="5" ry="2.500" fill="#fff8a0" fill-opacity=".9"/><path d="M64 48q16-6 44-1v6q-20-3-44 2z" fill="#2a524a" fill-opacity=".9"/><path d="M80 60q12-4 28-2v6H80z" fill="#264c46" fill-opacity=".7"/><ellipse cx="40" cy="62" rx="14" ry="3" fill="#d8841c" fill-opacity=".5"/></g>
<g filter="url(#bl04)"><path d="M47.0 48.5L47.6 54.0L49.8 55.1L79.7 54.6L77.5 58.4L71.9 62.9L65.3 67.3L60.9 65.6L53.1 60.7L48.7 57.3z" fill="#050505"/><path d="M59.8 46.3L63.1 44.6L66.4 45.7L67.5 49.6L63.1 51.8L60.9 50.1z" fill="#0a0a06"/><path d="M50 64v3M52 66v2.500M74 65v2.500M72 66.500v2" stroke="#1a1208" stroke-width=".6"/></g></svg>
<path d="M99.400 14.600a5.200 5.200 0 1 0 4.200 8.400a4.400 4.400 0 0 1-4.200-8.400z" fill="#f6f6ea"/>
<text x="65.0" y="7.8" text-anchor="middle" direction="rtl" font-size="3.78" fill="#141414" fill-opacity="0.82" textLength="52.6" lengthAdjust="spacingAndGlyphs" font-weight="bold">ساعت رسمی کشورها بر اساس نصف‌النهار</text><text x="63.6" y="23.4" text-anchor="middle" direction="rtl" font-size="4.64" fill="#c86a24" fill-opacity="0.8" textLength="58.7" lengthAdjust="spacingAndGlyphs" font-weight="bold">در اول بهار و پاییز طول روز</text></svg></div>
<svg class="star" width="12" height="11" style="left:714.5px;top:244px"><use href="#star" x="1.3" y="0.3" fill="#5a5a5a"/><path d="M.2 2.800h1.500M.4 5h1.300" stroke="#777" stroke-width=".8"/></svg>
<div class="th" id="slide5" style="left:548px;top:161px"><svg width="128" height="72" viewBox="0 0 128 72" font-family="DejaVu Sans, Liberation Sans, sans-serif"><defs><linearGradient id="g5a" x1="0" y1="0" x2="1" y2="1"><stop offset="0" stop-color="#d4f0c0"/><stop offset=".3" stop-color="#e8f8dc"/><stop offset=".6" stop-color="#d8f2a8"/><stop offset="1" stop-color="#e6f6b4"/></linearGradient>
<radialGradient id="g5b" cx=".5" cy=".5" r=".55"><stop offset="0" stop-color="#1414a8"/><stop offset=".8" stop-color="#0a0a90"/><stop offset="1" stop-color="#06066c"/></radialGradient></defs>
<rect width="128" height="72" fill="url(#g5a)"/>
<g filter="url(#bl3)"><ellipse cx="26" cy="56" rx="26" ry="12" fill="#b2e274" fill-opacity=".85"/><ellipse cx="104" cy="42" rx="22" ry="12" fill="#bce888" fill-opacity=".8"/><ellipse cx="72" cy="64" rx="24" ry="8" fill="#c8ec90" fill-opacity=".8"/><ellipse cx="14" cy="12" rx="14" ry="9" fill="#c8f0ee" fill-opacity=".85"/><ellipse cx="60" cy="4" rx="30" ry="5" fill="#dcf6ee" fill-opacity=".9"/><ellipse cx="114" cy="64" rx="14" ry="8" fill="#eef6a8" fill-opacity=".85"/><ellipse cx="40" cy="36" rx="14" ry="8" fill="#d0f0a0" fill-opacity=".8"/><ellipse cx="96" cy="18" rx="16" ry="8" fill="#d4f2a4" fill-opacity=".7"/><ellipse cx="6" cy="36" rx="8" ry="10" fill="#f0fae8" fill-opacity=".9"/><ellipse cx="56" cy="66" rx="8" ry="5" fill="#a8dcc8" fill-opacity=".6"/></g>
<g filter="url(#bl12)"><ellipse cx="36" cy="49" rx="7" ry="3.500" fill="#fff" fill-opacity=".9"/><ellipse cx="112" cy="28" rx="8" ry="3" fill="#fff" fill-opacity=".7"/><ellipse cx="86" cy="52" rx="10" ry="3" fill="#f4fce4" fill-opacity=".7"/><path d="M44 62q10-6 20-4l-14 10z" fill="#98d860" fill-opacity=".8"/><path d="M90 68l10-4 2 3-8 4z" fill="#5a7a48" fill-opacity=".5"/></g>
<circle cx="64" cy="39.100" r="14.200" fill="url(#g5b)"/>
<g filter="url(#bl06)"><path d="M51.500 36q2-7 9-8.500l7 0 4 3-4 3-5 1.500-2 4-4 3-3 0z" fill="#a05a22"/><path d="M58 44l5-1.500 4 2-1 5-5 1-3-3z" fill="#9a5620"/><path d="M75 34q3 2 3.500 6l-1 7-3 3-1-6z" fill="#eef0f6" fill-opacity=".9"/><path d="M58 52q7 2 13-1l-3 2.500q-5 1-8-.5z" fill="#e8ecf4" fill-opacity=".85"/><path d="M67 38l3 3M69 42l2 2" stroke="#dfe4f0" stroke-width=".7"/></g>
<text x="43.8" y="10.8" text-anchor="middle" direction="rtl" font-size="3.78" fill="#141414" fill-opacity="0.82" textLength="54.4" lengthAdjust="spacingAndGlyphs" font-weight="bold">خورشید در تابستان بر مدار رأس‌السرطان</text><text x="83.6" y="10.8" text-anchor="middle" direction="rtl" font-size="3.78" fill="#1818d0" fill-opacity="0.9" textLength="23.2" lengthAdjust="spacingAndGlyphs" font-weight="bold">یک حرکت وضعی</text><text x="105.1" y="10.8" text-anchor="middle" direction="rtl" font-size="3.78" fill="#141414" fill-opacity="0.82" textLength="17.8" lengthAdjust="spacingAndGlyphs" font-weight="bold">زمین دارای</text><text x="55.4" y="19.0" text-anchor="middle" direction="rtl" font-size="3.78" fill="#141414" fill-opacity="0.82" textLength="13.3" lengthAdjust="spacingAndGlyphs" font-weight="bold">می‌گویند</text><text x="73.5" y="19.0" text-anchor="middle" direction="rtl" font-size="3.78" fill="#1818d0" fill-opacity="0.9" textLength="21.1" lengthAdjust="spacingAndGlyphs" font-weight="bold">حرکت وضعی</text></svg></div>
<svg class="star" width="12" height="11" style="left:549.5px;top:244px"><use href="#star" x="1.3" y="0.3" fill="#5a5a5a"/><path d="M.2 2.800h1.500M.4 5h1.300" stroke="#777" stroke-width=".8"/></svg>
<div class="th" id="slide6" style="left:383px;top:161px"><svg width="128" height="72" viewBox="0 0 128 72" font-family="DejaVu Sans, Liberation Sans, sans-serif"><defs><linearGradient id="g6a" x1="0" y1="0" x2="0" y2="1"><stop offset="0" stop-color="#5cb2f2"/><stop offset=".3" stop-color="#8ecbf6"/><stop offset=".6" stop-color="#cfe8fa"/><stop offset=".76" stop-color="#a8d8a0"/><stop offset=".86" stop-color="#5cb430"/><stop offset="1" stop-color="#48a41e"/></linearGradient>
<linearGradient id="g6b" x1="0" y1="0" x2="1" y2="0"><stop offset="0" stop-color="#07142a"/><stop offset=".45" stop-color="#0c2038"/><stop offset=".55" stop-color="#24587e"/><stop offset="1" stop-color="#3a7ea8"/></linearGradient></defs>
<rect width="128" height="72" fill="url(#g6a)"/>
<g filter="url(#bl3)"><ellipse cx="62" cy="20" rx="30" ry="16" fill="#fff" fill-opacity=".8"/><path d="M24 -4l22 0-20 44z" fill="#fff" fill-opacity=".5"/><path d="M84 -4h16l8 40z" fill="#fff" fill-opacity=".5"/><ellipse cx="114" cy="44" rx="18" ry="9" fill="#fff" fill-opacity=".95"/><ellipse cx="6" cy="48" rx="9" ry="7" fill="#fff" fill-opacity=".85"/><ellipse cx="122" cy="8" rx="12" ry="8" fill="#3a9aec" fill-opacity=".8"/><ellipse cx="4" cy="8" rx="10" ry="8" fill="#4aa4ee" fill-opacity=".7"/><ellipse cx="90" cy="66" rx="44" ry="8" fill="#3f9e1c"/><ellipse cx="10" cy="66" rx="12" ry="6" fill="#9cd040"/><ellipse cx="40" cy="71" rx="16" ry="2" fill="#e8f8e0"/></g>
<rect x="13" y="24.100" width="41" height="42.900" fill="#000"/>
<svg x="13" y="24.100" width="41" height="42.900" viewBox="13 24.100 41 42.900"><circle cx="33.500" cy="45.500" r="20.200" fill="#081628"/>
<path d="M39 25.500q-6 20-12 40a20.200 20.200 0 0 0 12-40z" fill="#2a648e"/>
<g filter="url(#bl06)"><path d="M40 28l2 2 1 6-2 6 2 5-3-2-2-6 1-6z" fill="#a8a850"/><path d="M40 48q6-2 10 2l2 5-3 8-5 5-2-6-1-8z" fill="#9ea860"/><path d="M30 28q6-2 8 0l-2 10-6-2z" fill="#1a2438"/></g></svg>
<g fill="#d8c83c" fill-opacity=".85"><rect x="68.600" y="37.400" width="18" height="1.300"/><rect x="70.600" y="40.300" width="16" height="1.300"/><rect x="72" y="43.200" width="14" height="1.300"/><rect x="71" y="46.100" width="15" height="1.300"/><rect x="70" y="49" width="16" height="1.300"/><rect x="68.600" y="51.900" width="18" height="1.300"/></g>
<circle cx="93.500" cy="45.400" r="9.700" fill="#fdf800"/>
<text x="65.8" y="11.5" text-anchor="middle" direction="rtl" font-size="3.78" fill="#141414" fill-opacity="0.82" textLength="62.1" lengthAdjust="spacingAndGlyphs" font-weight="bold">زمین در هر ۲۴ ساعت یک بار</text><text x="67.0" y="20.4" text-anchor="middle" direction="rtl" font-size="3.78" fill="#141414" fill-opacity="0.82" textLength="118.5" lengthAdjust="spacingAndGlyphs" font-weight="bold">حرکت وضعی زمین از غرب به شرق است و خورشید از شرق طلوع</text><text x="93.5" y="46.4" text-anchor="middle" direction="rtl" font-size="2.92" fill="#141414" fill-opacity="0.8" textLength="10.0" lengthAdjust="spacingAndGlyphs" font-weight="bold">خورشید</text></svg></div>
<svg class="star" width="12" height="11" style="left:384.5px;top:244px"><use href="#star" x="1.3" y="0.3" fill="#5a5a5a"/><path d="M.2 2.800h1.500M.4 5h1.300" stroke="#777" stroke-width=".8"/></svg>
<div class="th" id="slide7" style="left:218px;top:161px"><svg width="128" height="72" viewBox="0 0 128 72" font-family="DejaVu Sans, Liberation Sans, sans-serif"><defs><linearGradient id="g7a" x1="0" y1="0" x2="1" y2="1"><stop offset="0" stop-color="#efeafc"/><stop offset=".5" stop-color="#e6e2fa"/><stop offset=".85" stop-color="#b8a6f6"/><stop offset="1" stop-color="#9276f0"/></linearGradient>
<linearGradient id="g7b" x1="0" y1="0" x2="1" y2="0"><stop offset="0" stop-color="#93a4c2"/><stop offset=".36" stop-color="#a4b0c6"/><stop offset=".5" stop-color="#b0a690"/><stop offset=".66" stop-color="#a87c26"/><stop offset=".84" stop-color="#967434"/><stop offset="1" stop-color="#7a7876"/></linearGradient>
<linearGradient id="g7c" x1="0" y1="0" x2="0" y2="1"><stop offset="0" stop-color="#fff" stop-opacity=".2"/><stop offset=".45" stop-color="#fff" stop-opacity=".1"/><stop offset=".53" stop-color="#000" stop-opacity=".3"/><stop offset="1" stop-color="#000" stop-opacity=".6"/></linearGradient></defs>
<rect width="128" height="72" fill="url(#g7a)"/>
<g filter="url(#bl2)"><ellipse cx="4" cy="52" rx="8" ry="5" fill="#f4f0a8" fill-opacity=".8"/><path d="M118 50q8-6 14-4v30h-14z" fill="#8a6cf0"/><ellipse cx="122" cy="58" rx="6" ry="3" fill="#e4dcff"/></g>
<rect x="10" y="26" width="108.400" height="45.600" fill="#0a0a0a"/>
<rect x="11.200" y="27" width="106" height="43.400" fill="url(#g7b)"/>
<rect x="11.200" y="27" width="106" height="43.400" fill="url(#g7c)"/>
<g stroke="#22262c" stroke-opacity=".3" stroke-width=".6"><path d="M20 27v43M29 27v43M38 27v43M47 27v43M56 27v43M65 27v43M74 27v43M83 27v43M92 27v43M101 27v43M110 27v43"/></g>
<svg x="11.200" y="27" width="106" height="43.400" viewBox="11.200 27 106 43.400"><g filter="url(#bl12)"><g fill="#fff"><circle cx="15.500" cy="36" r="3.200"/><circle cx="24.500" cy="33" r="3.200"/><circle cx="33.500" cy="32" r="3.400"/><circle cx="42.500" cy="33" r="3.400"/><circle cx="51.500" cy="36" r="3.400"/><circle cx="60.500" cy="40" r="3.200"/><circle cx="69.500" cy="43" r="3" fill="#ffeeb0"/><circle cx="78.500" cy="45" r="2.800" fill="#ffd060"/><circle cx="87.500" cy="46.500" r="2.800" fill="#ffc030"/><circle cx="96.500" cy="45" r="2.800" fill="#ffd060"/><circle cx="105.500" cy="43" r="3" fill="#fff0c0"/><circle cx="114" cy="40" r="3"/></g>
<g fill="#fff" fill-opacity=".5"><circle cx="15.500" cy="60" r="2.600"/><circle cx="24.500" cy="62" r="2.400"/><circle cx="33.500" cy="63" r="2.600"/><circle cx="42.500" cy="62" r="2.400"/><circle cx="51.500" cy="60" r="2.600"/><circle cx="60.500" cy="56" r="2.600"/><circle cx="69.500" cy="54" r="2.400" fill="#ffe9a0"/><circle cx="87.500" cy="53" r="2.200" fill="#ffc850"/><circle cx="105.500" cy="54" r="2.400"/><circle cx="114" cy="56" r="2.400"/></g>
<path d="M11 49.500q8-1 10-3.500 3 3.500 10 3.500 10 .5 18-.5 4-4 8-1 6 2 12 1.500 6-3.500 16-2.500 6 2 14 2 6-.5 8-3.500 3 3 8 4v2H11z" fill="#10141c"/></g></svg>
<text x="64.5" y="7.7" text-anchor="middle" direction="rtl" font-size="3.78" fill="#141414" fill-opacity="0.82" textLength="123.0" lengthAdjust="spacingAndGlyphs" font-weight="bold">حرکت انتقالی زمین به دور خورشید باعث پیدایش فصل‌ها می‌شود</text><text x="66.0" y="16.0" text-anchor="middle" direction="rtl" font-size="3.78" fill="#141414" fill-opacity="0.82" textLength="122.0" lengthAdjust="spacingAndGlyphs" font-weight="bold">مدار زمین بیضی شکل است و محور آن نسبت به سطح مدار مایل است</text><text x="70.0" y="24.2" text-anchor="middle" direction="rtl" font-size="3.78" fill="#141414" fill-opacity="0.82" textLength="28.0" lengthAdjust="spacingAndGlyphs" font-weight="bold">هر نصف‌النهار نشان‌دهنده</text></svg></div>
<svg class="star" width="12" height="11" style="left:219.5px;top:244px"><use href="#star" x="1.3" y="0.3" fill="#5a5a5a"/><path d="M.2 2.800h1.500M.4 5h1.300" stroke="#777" stroke-width=".8"/></svg>
<div class="th" id="slide8" style="left:53px;top:161px"><svg width="128" height="72" viewBox="0 0 128 72" font-family="DejaVu Sans, Liberation Sans, sans-serif"><defs><linearGradient id="g8a" x1="0" y1="0" x2="0" y2="1"><stop offset="0" stop-color="#fdeed6"/><stop offset=".3" stop-color="#fdf0de"/><stop offset=".44" stop-color="#f8c88c"/><stop offset=".5" stop-color="#f39a44"/><stop offset=".6" stop-color="#f8ba68"/><stop offset=".8" stop-color="#f6a64c"/><stop offset="1" stop-color="#ee7a1e"/></linearGradient>
<linearGradient id="g8b" x1="0" y1="0" x2="1" y2="0"><stop offset="0" stop-color="#fdfdfd"/><stop offset=".12" stop-color="#f2f2f4"/><stop offset=".42" stop-color="#c4c4c8"/><stop offset=".5" stop-color="#eef4fb"/><stop offset="1" stop-color="#eef4fb"/></linearGradient>
<radialGradient id="g8c" cx="1" cy=".5" r="1"><stop offset="0" stop-color="#f8e850"/><stop offset=".6" stop-color="#faf08c"/><stop offset="1" stop-color="#fcf8c8" stop-opacity="0"/></radialGradient></defs>
<rect width="128" height="72" fill="url(#g8a)"/>
<g filter="url(#bl3)"><ellipse cx="10" cy="22" rx="16" ry="12" fill="#fbd9b0" fill-opacity=".8"/><ellipse cx="100" cy="30" rx="24" ry="5" fill="#fff" fill-opacity=".7"/><ellipse cx="14" cy="36" rx="20" ry="4" fill="#f08a2c" fill-opacity=".8"/><ellipse cx="112" cy="52" rx="18" ry="8" fill="#f9c070" fill-opacity=".7"/><ellipse cx="20" cy="56" rx="16" ry="6" fill="#f8b860" fill-opacity=".7"/></g>
<rect x="35" y="35.200" width="58.300" height="34.500" fill="#fff"/>
<rect x="37" y="39" width="54.500" height="26" fill="url(#g8b)"/>
<rect x="78" y="40" width="13.500" height="24" fill="url(#g8c)"/>
<circle cx="62.600" cy="51.500" r="9.500" fill="#f4f4f4" stroke="#888" stroke-width=".5"/>
<path d="M62.600 42a9.500 9.500 0 0 0-3.600 18.300q3-3 3.600-9z" fill="#9a9a9e"/>
<path d="M54 44q8-6 16 2 3 3 4 5M52 49q8-5 14 2l3 5" fill="none" stroke="#e040b0" stroke-width="1.100" filter="url(#bl04)"/>
<text x="92.5" y="11.1" text-anchor="middle" direction="rtl" font-size="3.96" fill="#141414" fill-opacity="0.82" textLength="45.0" lengthAdjust="spacingAndGlyphs" font-weight="bold">ساعت رسمی کشورها بر اساس</text><text x="39.0" y="11.1" text-anchor="middle" direction="rtl" font-size="3.96" fill="#141414" fill-opacity="0.82" textLength="18.0" lengthAdjust="spacingAndGlyphs" font-weight="bold">است</text><text x="59.0" y="11.1" text-anchor="middle" direction="rtl" font-size="3.96" fill="#1a1ae0" fill-opacity="0.9" textLength="20.0" lengthAdjust="spacingAndGlyphs" font-weight="bold">حرکت ظاهری</text><text x="32.5" y="23.6" text-anchor="middle" direction="rtl" font-size="3.96" fill="#141414" fill-opacity="0.82" textLength="45.0" lengthAdjust="spacingAndGlyphs" font-weight="bold">در اول بهار و پاییز</text><text x="67.0" y="23.6" text-anchor="middle" direction="rtl" font-size="3.96" fill="#1a1ae0" fill-opacity="0.9" textLength="22.0" lengthAdjust="spacingAndGlyphs" font-weight="bold">شرقی‌تر است</text><text x="95.5" y="23.6" text-anchor="middle" direction="rtl" font-size="3.96" fill="#141414" fill-opacity="0.82" textLength="33.0" lengthAdjust="spacingAndGlyphs" font-weight="bold">خورشید در تابستان بر</text><text x="119.5" y="23.6" text-anchor="middle" direction="rtl" font-size="3.96" fill="#1a1ae0" fill-opacity="0.9" textLength="13.0" lengthAdjust="spacingAndGlyphs" font-weight="bold">در واقع</text><text x="67.0" y="32.0" text-anchor="middle" direction="rtl" font-size="3.96" fill="#141414" fill-opacity="0.82" textLength="62.0" lengthAdjust="spacingAndGlyphs" font-weight="bold">زمین در هر ۲۴ ساعت یک بار</text></svg></div>
<svg class="star" width="12" height="11" style="left:54.5px;top:244px"><use href="#star" x="1.3" y="0.3" fill="#5a5a5a"/><path d="M.2 2.800h1.500M.4 5h1.300" stroke="#777" stroke-width=".8"/></svg>
<div class="th" id="slide9" style="left:1208px;top:286px"><svg width="128" height="72" viewBox="0 0 128 72" font-family="DejaVu Sans, Liberation Sans, sans-serif"><defs><linearGradient id="g9a" x1="0" y1="0" x2="0" y2="1"><stop offset="0" stop-color="#48b6f0"/><stop offset=".25" stop-color="#8cd2f2"/><stop offset=".45" stop-color="#d4ecf0"/><stop offset=".6" stop-color="#f2e2a0"/><stop offset=".8" stop-color="#f4d878"/><stop offset="1" stop-color="#f2d680"/></linearGradient>
<linearGradient id="g9b" x1="0" y1="0" x2="1" y2="0"><stop offset="0" stop-color="#b8a8b8"/><stop offset=".45" stop-color="#d2b6c8"/><stop offset=".7" stop-color="#e0c0c4"/><stop offset=".88" stop-color="#7a86b8"/><stop offset="1" stop-color="#2c4a8c"/></linearGradient>
<radialGradient id="g9c" cx=".5" cy=".5" r=".5"><stop offset="0" stop-color="#fff"/><stop offset=".22" stop-color="#fffbd0"/><stop offset=".5" stop-color="#fbd84a" stop-opacity=".8"/><stop offset="1" stop-color="#f4c030" stop-opacity="0"/></radialGradient></defs>
<rect width="128" height="72" fill="url(#g9a)"/>
<svg x="0" y="0" width="77" height="72" viewBox="0 0 77 72"><rect width="77" height="72" fill="url(#g9b)"/>
<g filter="url(#bl2)"><path d="M50 -4h30v30q-10-16-30-30z" fill="#5a5a98" fill-opacity=".7"/><path d="M70 40q6 10 8 34h-4q-1-20-4-34z" fill="#c8b8d0"/></g>
<g filter="url(#bl12)"><path d="M-3.4 -3.6L16.6 0.3L36.5 10.8L52.0 20.8L63.1 38.5L69.7 54.0L72.5 73.9L-3.4 73.9z" fill="#a08a5c"/><path d="M-0.0 49.6L23.2 49.6L43.2 62.9L49.8 73.9L-3.4 73.9L-3.4 49.6z" fill="#8a7a6a"/><path d="M-3.4 25.2L16.6 25.2L23.2 36.3L12.1 47.4L-3.4 49.6z" fill="#1e3e6c"/><path d="M-3.4 -3.6L16.6 0.3L26.5 7.5L22.1 14.1L12.1 24.1L-3.4 25.2z" fill="#1f7c16"/><path d="M16.6 18.0L23.2 16.9L26.5 21.9L18.8 22.4z" fill="#2a88b8"/><path d="M12.1 24.1L23.2 21.9L32.1 25.2L23.2 28.5L14.4 27.4z" fill="#4a4a28"/><path d="M23.2 36.3L43.2 40.7L56.4 49.6L54.2 62.9L40.9 54.0L26.5 45.1z" fill="#e6d6a4"/><path d="M32.1 14.1L43.2 15.2L52.0 20.8L60.9 38.5L52.0 40.7L40.9 34.1L32.1 25.2z" fill="#f2c224"/><path d="M25.4 8.6L36.5 10.8L43.2 15.8L32.1 17.5z" fill="#c89a3a"/><path d="M55.3 44.0L60.9 40.7L69.7 58.4L72.5 73.9L56.4 73.9L58.7 58.4z" fill="#3a82ca"/><path d="M58.7 39.6L67.5 51.8L70.0 59.8L65.3 55.1L59.8 45.1z" fill="#2c5a1c"/><path d="M47.6 62.9L56.4 60.7L58.7 73.9L49.8 73.9z" fill="#7a98c0"/></g>
<circle cx="54.200" cy="27.400" r="15" fill="url(#g9c)"/></svg>
<g filter="url(#bl12)" fill="#fff" fill-opacity=".7"><ellipse cx="89" cy="2.500" rx="4" ry="1.300"/><ellipse cx="96" cy="6" rx="3" ry="1.200"/><ellipse cx="116" cy="3.500" rx="5" ry="1.300"/><ellipse cx="122" cy="8" rx="4" ry="1.200"/><ellipse cx="84" cy="46" rx="5" ry="1.500"/><ellipse cx="120" cy="52" rx="5" ry="2"/><ellipse cx="96" cy="64" rx="8" ry="2"/></g>
<path d="M100.200 2.500q2.400-1.800 4.600.2 1.200 2.600-1.200 4.600l-.3 2.400h-1.700l-.2-2.600q-2.600-2-1.200-4.600z" fill="#e8a050"/><circle cx="102.400" cy="11.500" r=".9" fill="#e8a050"/>
<g filter="url(#bl04)"><path d="M85 39.800h37" stroke="#8cd8a0" stroke-width=".7"/><circle cx="91.300" cy="39.800" r="1.700" fill="#62e020"/><circle cx="115.100" cy="39.800" r="1.700" fill="#62e020"/><circle cx="103" cy="39.800" r="1.200" fill="#f050b0"/></g>
<text x="102.9" y="19.0" text-anchor="middle" direction="rtl" font-size="3.78" fill="#141414" fill-opacity="0.82" textLength="48.7" lengthAdjust="spacingAndGlyphs" font-weight="bold">حرکت وضعی زمین از غرب</text><text x="102.9" y="27.3" text-anchor="middle" direction="rtl" font-size="3.78" fill="#141414" fill-opacity="0.82" textLength="48.7" lengthAdjust="spacingAndGlyphs" font-weight="bold">حرکت انتقالی زمین به دور</text><text x="102.7" y="35.4" text-anchor="middle" direction="rtl" font-size="3.78" fill="#141414" fill-opacity="0.82" textLength="16.0" lengthAdjust="spacingAndGlyphs" font-weight="bold">مدار زمین</text><text x="103.2" y="50.9" text-anchor="middle" direction="rtl" font-size="3.78" fill="#141414" fill-opacity="0.82" textLength="44.9" lengthAdjust="spacingAndGlyphs" font-weight="bold">هر نصف‌النهار نشان‌دهنده یک ساعت</text><text x="103.5" y="59.9" text-anchor="middle" direction="rtl" font-size="3.78" fill="#141414" fill-opacity="0.82" textLength="36.6" lengthAdjust="spacingAndGlyphs" font-weight="bold">ساعت رسمی کشورها بر</text></svg></div>
<svg class="star" width="12" height="11" style="left:1209.5px;top:369px"><use href="#star" x="1.3" y="0.3" fill="#5a5a5a"/><path d="M.2 2.800h1.500M.4 5h1.300" stroke="#777" stroke-width=".8"/></svg>
<div class="th" id="slide10" style="left:1043px;top:286px"><svg width="128" height="72" viewBox="0 0 128 72" font-family="DejaVu Sans, Liberation Sans, sans-serif"><defs><linearGradient id="g10a" x1="0" y1="0" x2="0" y2="1"><stop offset="0" stop-color="#c6c6d4"/><stop offset=".3" stop-color="#d6d2dc"/><stop offset=".48" stop-color="#e8c2b2"/><stop offset=".58" stop-color="#c89080"/><stop offset=".61" stop-color="#1a1210"/><stop offset=".64" stop-color="#000"/><stop offset="1" stop-color="#000"/></linearGradient>
<linearGradient id="g10b" x1="0" y1="0" x2="1" y2="0"><stop offset="0" stop-color="#1b5a82"/><stop offset=".3" stop-color="#236690"/><stop offset=".5" stop-color="#1e5c8a"/><stop offset=".6" stop-color="#10203a"/><stop offset="1" stop-color="#0e1830"/></linearGradient></defs>
<rect width="128" height="72" fill="url(#g10a)"/>
<g fill="#fff" fill-opacity=".85"><circle cx="4.500" cy="15" r=".9"/><circle cx="4.500" cy="33" r="1"/><circle cx="56" cy="2.500" r=".7"/><circle cx="3.500" cy="50.500" r=".8"/><circle cx="17" cy="64.500" r=".8"/><circle cx="3.500" cy="68.500" r=".9"/><circle cx="85" cy="68" r=".9"/><circle cx="98" cy="64" r=".8"/><circle cx="110" cy="67" r=".7"/><circle cx="12" cy="60.500" r=".6"/><circle cx="34" cy="60" r=".6"/><circle cx="115" cy="59.500" r=".7"/><circle cx="94" cy="60" r=".5"/></g>
<svg x="9.900" y="12.800" width="108.200" height="46.200" viewBox="9.900 12.800 108.200 46.200"><rect x="9.900" y="12.800" width="108.200" height="46.200" fill="url(#g10b)"/>
<g filter="url(#bl12)"><path d="M69.7 39.6L78.6 36.3L89.7 41.8L96.3 45.1L105.2 41.8L118.1 44.0L118.1 59.0L66.4 59.0L67.5 49.6z" fill="#1f4f92"/><path d="M84 50q10-2 20 2l14-2v9H84z" fill="#2a60a4"/><path d="M9 12h26v20q-14 4-26 0z" fill="#2a6c88" fill-opacity=".6"/><path d="M66.4 13.6L77.5 13.6L76.4 20.8L71.9 25.2L74.2 28.5L71.9 35.2L65.3 35.7L59.8 30.8L60.9 24.1L67.5 21.9z" fill="#7a9c5a"/><path d="M64 24l8-2 3 8-6 4-4-4z" fill="#c4c88a"/><path d="M63.1 36.3L69.7 37.4L66.4 44.0L60.9 47.4L58.7 44.0z" fill="#6a9a4a"/><path d="M48.7 59.0L54.2 51.8L65.3 45.1L69.7 39.6L67.5 49.6L66.4 59.0z" fill="#f2f2f0"/></g>
<g fill="#f4dc98" fill-opacity=".75"><circle cx="88" cy="19" r=".6"/><circle cx="96" cy="24" r=".5"/><circle cx="86" cy="28" r=".5"/><circle cx="104" cy="18" r=".5"/><circle cx="94" cy="33" r=".6"/><circle cx="110" cy="28" r=".5"/><circle cx="100" cy="30" r=".5"/><circle cx="82" cy="42" r=".6"/><circle cx="114" cy="36" r=".5"/></g></svg>
<text x="65.0" y="9.2" text-anchor="middle" direction="rtl" font-size="3.78" fill="#141414" fill-opacity="0.82" textLength="66.0" lengthAdjust="spacingAndGlyphs" font-weight="bold">در اول بهار و پاییز طول روز</text></svg></div>
<svg class="star" width="12" height="11" style="left:1044.5px;top:369px"><use href="#star" x="1.3" y="0.3" fill="#5a5a5a"/><path d="M.2 2.800h1.500M.4 5h1.300" stroke="#777" stroke-width=".8"/></svg>
<div class="th" id="slide11" style="left:878px;top:286px"><svg width="128" height="72" viewBox="0 0 128 72" font-family="DejaVu Sans, Liberation Sans, sans-serif"><defs><linearGradient id="g11a" x1="0" y1="0" x2="1" y2="1"><stop offset="0" stop-color="#f6e020"/><stop offset=".3" stop-color="#fbf26a"/><stop offset=".5" stop-color="#fcfcd0"/><stop offset=".7" stop-color="#b6ea60"/><stop offset="1" stop-color="#4ccc28"/></linearGradient>
<linearGradient id="g11b" x1="0" y1="0" x2="1" y2="0"><stop offset="0" stop-color="#d8a0e0"/><stop offset=".5" stop-color="#e6c0ea"/><stop offset="1" stop-color="#c890dc"/></linearGradient>
<radialGradient id="g11c" cx=".35" cy=".3" r=".75"><stop offset="0" stop-color="#8ad8f8"/><stop offset=".35" stop-color="#2a6ae0"/><stop offset="1" stop-color="#0a208c"/></radialGradient>
<radialGradient id="g11d" cx=".5" cy=".5" r=".5"><stop offset="0" stop-color="#fff"/><stop offset=".7" stop-color="#f4f4ec"/><stop offset=".78" stop-color="#d8b450"/><stop offset="1" stop-color="#b8903c"/></radialGradient></defs>
<rect width="128" height="72" fill="url(#g11a)"/>
<g filter="url(#bl3)"><ellipse cx="10" cy="4" rx="14" ry="5" fill="#f4a828" fill-opacity=".6"/><path d="M86 30q20-8 46 0v14q-26-6-46 2z" fill="#fcfce0" fill-opacity=".8"/><path d="M-4 62q20 6 40 4v10H-4z" fill="#f8d020"/><path d="M100 60q16 4 32-2v18h-32z" fill="#38c020"/></g>
<rect x="5.400" y="3.400" width="117.400" height="5" fill="url(#g11b)"/>
<ellipse cx="44" cy="50" rx="34" ry="20.500" fill="#a6caf0" stroke="#8aa4c8" stroke-width=".6"/>
<g filter="url(#bl06)" fill="#d6bc8c"><path d="M18 38q8-4 14-2l2 5-6 4-4 6-5-4z"/><path d="M30 52l5 1 2 7-3 6-4-6z"/><path d="M46 36l6-2 4 3-5 4z"/><path d="M46 44l7-1 4 4-1 8-4 6-4-6z"/><path d="M56 34q10-4 20 0l2 6-6 6-8-2-6-4z"/><path d="M68 58l6-1 2 4-5 2z"/></g>
<path d="M10 50h68M44 29.500v41" stroke="#44506a" stroke-width=".6" fill="none"/>
<path d="M14 42h60M14 58h60M27 32v36M61 32v36" stroke="#6a88b4" stroke-width=".35" fill="none"/>
<circle cx="111.400" cy="43" r="10.300" fill="url(#g11c)"/>
<g filter="url(#bl06)"><path d="M104 40q4-6 10-5l2 5-5 5-4 4z" fill="#3cb83a"/><path d="M113 47l5-2 1 5-4 2z" fill="#2e9a30"/></g>
<circle cx="99.600" cy="57.400" r="10" fill="url(#g11d)"/>
<circle cx="103" cy="47" r="2" fill="none" stroke="#c8a040" stroke-width="1"/>
<path d="M99.600 57.400l3-4M99.600 57.400l-4 1" stroke="#555" stroke-width=".6"/>
<text x="65.0" y="7.4" text-anchor="middle" direction="rtl" font-size="3.61" fill="#141414" fill-opacity="0.82" textLength="106.0" lengthAdjust="spacingAndGlyphs" font-weight="bold">خورشید در تابستان بر مدار رأس‌السرطان عمود می‌تابد</text><text x="64.5" y="18.0" text-anchor="middle" direction="rtl" font-size="3.78" fill="#141414" fill-opacity="0.82" textLength="125.0" lengthAdjust="spacingAndGlyphs" font-weight="bold">زمین در هر ۲۴ ساعت یک بار به دور خود می‌چرخد و شب و</text><text x="67.0" y="26.0" text-anchor="middle" direction="rtl" font-size="3.78" fill="#141414" fill-opacity="0.82" textLength="90.0" lengthAdjust="spacingAndGlyphs" font-weight="bold">حرکت وضعی زمین از غرب به شرق است و خورشید</text></svg></div>
<svg class="star" width="12" height="11" style="left:879.5px;top:369px"><use href="#star" x="1.3" y="0.3" fill="#5a5a5a"/><path d="M.2 2.800h1.500M.4 5h1.300" stroke="#777" stroke-width=".8"/></svg>
<div class="th" id="slide12" style="left:713px;top:286px"><svg width="128" height="72" viewBox="0 0 128 72" font-family="DejaVu Sans, Liberation Sans, sans-serif"><defs><linearGradient id="g12a" x1="0" y1="0" x2="1" y2="1"><stop offset="0" stop-color="#fce8d0"/><stop offset=".25" stop-color="#fff"/><stop offset=".45" stop-color="#fdf0dc"/><stop offset=".62" stop-color="#f6b266"/><stop offset=".8" stop-color="#f08c2c"/><stop offset="1" stop-color="#f4a040"/></linearGradient>
<linearGradient id="g12b" x1="0" y1="0" x2="0" y2="1"><stop offset="0" stop-color="#9cd0f0"/><stop offset=".5" stop-color="#c8e4f6"/><stop offset="1" stop-color="#e4eef4"/></linearGradient>
<radialGradient id="g12c" cx=".5" cy=".5" r=".7"><stop offset="0" stop-color="#d2ee9a"/><stop offset=".6" stop-color="#9ed450"/><stop offset="1" stop-color="#6cb838"/></radialGradient>
<radialGradient id="g12d" cx=".4" cy=".4" r=".7"><stop offset="0" stop-color="#dcecf8"/><stop offset=".7" stop-color="#a0c0e0"/><stop offset="1" stop-color="#7c9cc4"/></radialGradient></defs>
<rect width="128" height="72" fill="url(#g12a)"/>
<g filter="url(#bl3)"><path d="M-4 50q30-6 60 10l20 16H-4z" fill="#f29030"/><path d="M40 -4h40L50 40 20 60z" fill="#fff" fill-opacity=".7"/><path d="M132 20v30q-20 10-40 26h-30q40-30 70-56z" fill="#f6a850" fill-opacity=".8"/><path d="M-4 20q10 0 16 10l-16 14z" fill="#f8b870" fill-opacity=".7"/></g>
<rect x="3.400" y="22" width="41.600" height="42.700" rx="6.500" fill="url(#g12b)" stroke="#3a78b0" stroke-width=".9"/>
<g filter="url(#bl12)" fill="#f4b8c0" fill-opacity=".7"><circle cx="8" cy="48" r="2"/><circle cx="14" cy="60" r="2"/><circle cx="8" cy="34" r="1.500"/></g>
<rect x="85.300" y="22" width="40.400" height="42.700" rx="6.500" fill="url(#g12c)" stroke="#3a78b0" stroke-width=".9"/>
<circle cx="63" cy="51" r="13" fill="url(#g12d)" stroke="#8a8a92" stroke-width=".8"/>
<path d="M57 44q4-3 7-1l-1 6 3 5-3 6-3-5z" fill="#f4f4f6" fill-opacity=".9"/>
<path d="M63 38v26M56 40v22M70 40v22M52.500 44v14M73.500 44v14" stroke="#7a90b0" stroke-width=".35" fill="none"/>
<circle cx="63" cy="24" r="3.200" fill="#fcd410"/><circle cx="62.200" cy="23.200" r="1.300" fill="#fef080"/>
<path d="M63 30v7.500" stroke="#e02818" stroke-width="1.100"/><path d="M61.400 36l1.600 2.600 1.600-2.600z" fill="#e02818"/>
<text x="66.5" y="9.1" text-anchor="middle" direction="rtl" font-size="3.78" fill="#141414" fill-opacity="0.82" textLength="121.0" lengthAdjust="spacingAndGlyphs" font-weight="bold">حرکت انتقالی زمین به دور خورشید باعث پیدایش فصل‌ها می‌شود</text><text x="65.0" y="17.0" text-anchor="middle" direction="rtl" font-size="3.78" fill="#141414" fill-opacity="0.82" textLength="122.0" lengthAdjust="spacingAndGlyphs" font-weight="bold">مدار زمین بیضی شکل است و محور آن نسبت به سطح مدار مایل است</text><text x="24.5" y="30.8" text-anchor="middle" direction="rtl" font-size="3.61" fill="#141414" fill-opacity="0.82" textLength="35.0" lengthAdjust="spacingAndGlyphs" font-weight="bold">هر نصف‌النهار نشان‌دهنده یک</text><text x="24.5" y="38.4" text-anchor="middle" direction="rtl" font-size="3.61" fill="#141414" fill-opacity="0.82" textLength="31.0" lengthAdjust="spacingAndGlyphs" font-weight="bold">ساعت رسمی کشورها</text><text x="24.5" y="46.0" text-anchor="middle" direction="rtl" font-size="3.61" fill="#141414" fill-opacity="0.82" textLength="35.0" lengthAdjust="spacingAndGlyphs" font-weight="bold">در اول بهار و</text><text x="24.5" y="53.6" text-anchor="middle" direction="rtl" font-size="3.61" fill="#141414" fill-opacity="0.82" textLength="25.0" lengthAdjust="spacingAndGlyphs" font-weight="bold">خورشید در تابستان</text><text x="105.5" y="30.8" text-anchor="middle" direction="rtl" font-size="3.61" fill="#141414" fill-opacity="0.82" textLength="33.0" lengthAdjust="spacingAndGlyphs" font-weight="bold">زمین در هر ۲۴</text><text x="106.0" y="38.4" text-anchor="middle" direction="rtl" font-size="3.61" fill="#141414" fill-opacity="0.82" textLength="30.0" lengthAdjust="spacingAndGlyphs" font-weight="bold">حرکت وضعی زمین</text><text x="105.5" y="46.0" text-anchor="middle" direction="rtl" font-size="3.61" fill="#141414" fill-opacity="0.82" textLength="33.0" lengthAdjust="spacingAndGlyphs" font-weight="bold">حرکت انتقالی زمین به</text><text x="106.0" y="53.6" text-anchor="middle" direction="rtl" font-size="3.61" fill="#141414" fill-opacity="0.82" textLength="28.0" lengthAdjust="spacingAndGlyphs" font-weight="bold">مدار زمین بیضی</text><text x="105.5" y="61.0" text-anchor="middle" direction="rtl" font-size="3.61" fill="#141414" fill-opacity="0.82" textLength="33.0" lengthAdjust="spacingAndGlyphs" font-weight="bold">هر نصف‌النهار نشان‌دهنده یک</text></svg></div>
<svg class="star" width="12" height="11" style="left:714.5px;top:369px"><use href="#star" x="1.3" y="0.3" fill="#5a5a5a"/><path d="M.2 2.800h1.500M.4 5h1.300" stroke="#777" stroke-width=".8"/></svg>
<div class="th" id="slide13" style="left:548px;top:286px"><svg width="128" height="72" viewBox="0 0 128 72" font-family="DejaVu Sans, Liberation Sans, sans-serif"><defs><linearGradient id="g13a" x1="0" y1="1" x2="1" y2="0"><stop offset="0" stop-color="#fbe4f0"/><stop offset=".4" stop-color="#f6f2fa"/><stop offset=".7" stop-color="#dcecf8"/><stop offset="1" stop-color="#9cd2f0"/></linearGradient>
<linearGradient id="g13b" x1="0" y1="0" x2="0" y2="1"><stop offset="0" stop-color="#e8a890"/><stop offset=".5" stop-color="#b86048"/><stop offset="1" stop-color="#d49078"/></linearGradient></defs>
<rect width="128" height="72" fill="url(#g13a)"/>
<g filter="url(#bl3)"><ellipse cx="20" cy="30" rx="16" ry="10" fill="#fff" fill-opacity=".8"/><ellipse cx="110" cy="26" rx="14" ry="10" fill="#a8d8f2" fill-opacity=".8"/><ellipse cx="64" cy="64" rx="40" ry="8" fill="#fad8ea" fill-opacity=".8"/><ellipse cx="100" cy="52" rx="20" ry="8" fill="#fff" fill-opacity=".7"/><ellipse cx="40" cy="6" rx="24" ry="6" fill="#e0f0fa" fill-opacity=".9"/><ellipse cx="8" cy="60" rx="10" ry="8" fill="#f8d0e4" fill-opacity=".8"/></g>
<g fill="#f4a0c0" fill-opacity=".6"><circle cx="12" cy="16" r=".7"/><circle cx="30" cy="44" r=".7"/><circle cx="50" cy="66" r=".7"/><circle cx="88" cy="62" r=".7"/><circle cx="118" cy="44" r=".7"/><circle cx="100" cy="14" r=".7"/><circle cx="72" cy="22" r=".7"/><circle cx="22" cy="60" r=".7"/><circle cx="110" cy="66" r=".7"/><circle cx="6" cy="40" r=".7"/></g>
<rect x="15.200" y="5.200" width="98.100" height="5.700" fill="url(#g13b)"/>
<g filter="url(#bl06)"><path d="M46 40q4-5 10-4 8 2 16 0 6-2 10 3l-2 3q-6-3-12-1-8 2-16 0z" fill="#3c8a3a"/><circle cx="51" cy="38.500" r="2.600" fill="#d83850"/><circle cx="59" cy="37" r="2.400" fill="#e8708a"/><circle cx="68" cy="37" r="2.400" fill="#f09aa8"/><circle cx="77" cy="38.500" r="2.600" fill="#d83850"/></g>
<text x="65.0" y="9.7" text-anchor="middle" direction="rtl" font-size="3.61" fill="#141414" fill-opacity="0.82" textLength="74.0" lengthAdjust="spacingAndGlyphs" font-weight="bold">ساعت رسمی کشورها بر اساس نصف‌النهار مبدأ تعیین</text><text x="65.0" y="20.0" text-anchor="middle" direction="rtl" font-size="3.78" fill="#141414" fill-opacity="0.82" textLength="78.0" lengthAdjust="spacingAndGlyphs" font-weight="bold">در اول بهار و پاییز طول روز و شب</text><text x="65.0" y="29.0" text-anchor="middle" direction="rtl" font-size="3.78" fill="#141414" fill-opacity="0.82" textLength="118.0" lengthAdjust="spacingAndGlyphs" font-weight="bold">خورشید در تابستان بر مدار رأس‌السرطان عمود می‌تابد</text><text x="65.5" y="50.0" text-anchor="middle" direction="rtl" font-size="3.78" fill="#141414" fill-opacity="0.82" textLength="121.0" lengthAdjust="spacingAndGlyphs" font-weight="bold">زمین در هر ۲۴ ساعت یک بار به دور خود می‌چرخد و شب</text><text x="65.0" y="58.0" text-anchor="middle" direction="rtl" font-size="3.78" fill="#141414" fill-opacity="0.82" textLength="82.0" lengthAdjust="spacingAndGlyphs" font-weight="bold">حرکت وضعی زمین از غرب به شرق است و</text></svg></div>
<svg class="star" width="12" height="11" style="left:549.5px;top:369px"><use href="#star" x="1.3" y="0.3" fill="#5a5a5a"/><path d="M.2 2.800h1.500M.4 5h1.300" stroke="#777" stroke-width=".8"/></svg>
<div class="th" id="slide14" style="left:383px;top:286px"><svg width="128" height="72" viewBox="0 0 128 72" font-family="DejaVu Sans, Liberation Sans, sans-serif"><defs><radialGradient id="g14b" cx=".4" cy=".38" r=".62"><stop offset="0" stop-color="#8a7e68"/><stop offset=".3" stop-color="#3a5684"/><stop offset=".78" stop-color="#142a58"/><stop offset="1" stop-color="#060c1c"/></radialGradient>
<radialGradient id="g14d" cx=".5" cy=".3" r=".8"><stop offset="0" stop-color="#fff"/><stop offset=".8" stop-color="#fbfbfb"/><stop offset="1" stop-color="#dcdcdc"/></radialGradient></defs>
<rect width="128" height="72" fill="#f9fbea"/>
<g filter="url(#bl12)"><path d="M90.2 49.6L96.3 47.4L107.4 51.8L115.1 60.7L121.8 71.7L91.9 71.7L90.2 60.7z" fill="#f4d65a"/><path d="M100.7 36.3L111.8 23.0L127.9 17.5L127.9 54.0L117.4 51.8L106.3 44.0z" fill="#f5dc68"/><path d="M89.7 36.3L80.8 23.0L77.5 13.0L84.1 4.2L95.2 1.4L105.2 5.3L96.3 9.7L89.7 18.6L91.9 29.6z" fill="#f7e488"/><path d="M87.5 36.3L67.5 25.2L52.0 17.5L52.0 5.3L43.2 4.2L32.1 9.7L27.7 17.5L34.3 25.2L52.0 28.5L74.2 36.3z" fill="#f8e892"/><path d="M16.6 8.6L11.0 14.1L8.8 20.8L12.1 27.4L18.8 29.6L15.5 21.9L14.9 14.1z" fill="#faf2b8"/><path d="M42.0 40.7L52.0 34.1L67.5 36.3L85.2 40.7L83.0 49.6L67.5 71.7L47.6 71.7L43.2 58.4z" fill="#f6e27c"/><path d="M86 36q10-2 20 8M92 40q14 0 26 10" stroke="#d4e08a" stroke-width="1.200" fill="none"/><circle cx="95.200" cy="39.600" r="2.600" fill="#c4d478"/><path d="M78 4q4 16 16 32" stroke="#fbf6d8" stroke-width="4" fill="none"/></g>
<path d="M55 2.200h19.500q2.400 0 2.400 2.400v5.700q0 2.400-2.400 2.400H54.600q-2.400 0-2.400-2.400V5q0-2.800 2.800-2.800z" fill="#e88ee8" stroke="#3878b8" stroke-width=".8"/>
<rect x=".900" y="33.900" width="40.300" height="36.200" fill="#000"/>
<circle cx="20.500" cy="51.800" r="16" fill="url(#g14b)"/>
<g filter="url(#bl12)"><path d="M9 46q4-8 14-8l6 3-6 5-8 2z" fill="#b09a78" fill-opacity=".75"/><path d="M30 52l5 2-2 7-5-2z" fill="#9a8a6a" fill-opacity=".6"/><path d="M6 54q2 6 6 8" stroke="#b08a60" stroke-width="1.500" fill="none" stroke-opacity=".6"/></g>
<circle cx="64.400" cy="52.300" r="18" fill="url(#g14d)" stroke="#777" stroke-width=".6"/>
<g fill="none" stroke="#6e6e6e" stroke-width=".4"><path d="M67 34.600q-14 10-12 34M67 34.600q-9 12-6 36M67 34.600q-4 14 0 36M67 34.600q2 14 6 35M67 34.600q8 12 11 30M67 34.600q-18 8-19 26M67 34.600q12 8 15 22M67 34.600q-20 4-20 18"/><path d="M47 58q18 8 35-2M49 63q16 7 30-1"/></g>
<path d="M58 36q9-3 17 1l-4 3q-6-2-10 0z" fill="#9a9a9a" fill-opacity=".7"/>
<text x="64.5" y="8.7" text-anchor="middle" direction="rtl" font-size="3.27" fill="#141414" fill-opacity="0.9" textLength="19.0" lengthAdjust="spacingAndGlyphs" font-weight="bold">حرکت وضعی</text><text x="64.3" y="20.8" text-anchor="middle" direction="rtl" font-size="3.78" fill="#141414" fill-opacity="0.82" textLength="125.4" lengthAdjust="spacingAndGlyphs" font-weight="bold">حرکت انتقالی زمین به دور خورشید باعث پیدایش فصل‌ها می‌شود</text><text x="62.0" y="30.2" text-anchor="middle" direction="rtl" font-size="3.78" fill="#141414" fill-opacity="0.82" textLength="120.7" lengthAdjust="spacingAndGlyphs" font-weight="bold">مدار زمین بیضی شکل است و محور آن نسبت به سطح مدار مایل</text><text x="20.500" y="48.600" text-anchor="middle" font-size="3.200" font-weight="bold" fill="#20d820" fill-opacity=".9" textLength="28" lengthAdjust="spacingAndGlyphs">24 Hours = 15°</text><text x="20.500" y="56.800" text-anchor="middle" font-size="3.200" font-weight="bold" fill="#20d820" fill-opacity=".9">= 360°</text></svg></div>
<svg class="star" width="12" height="11" style="left:384.5px;top:369px"><use href="#star" x="1.3" y="0.3" fill="#5a5a5a"/><path d="M.2 2.800h1.500M.4 5h1.300" stroke="#777" stroke-width=".8"/></svg>
<div class="th" id="slide15" style="left:218px;top:286px"><svg width="128" height="72" viewBox="0 0 128 72" font-family="DejaVu Sans, Liberation Sans, sans-serif"><defs><linearGradient id="g15a" x1="0" y1="0" x2="0" y2="1"><stop offset="0" stop-color="#6cd2b8"/><stop offset=".25" stop-color="#9fe4d2"/><stop offset=".6" stop-color="#8cdccc"/><stop offset=".85" stop-color="#6cc8d8"/><stop offset="1" stop-color="#5ab6dc"/></linearGradient></defs>
<rect width="128" height="72" fill="url(#g15a)"/>
<g filter="url(#bl3)"><ellipse cx="6" cy="36" rx="7" ry="22" fill="#c8f2e6" fill-opacity=".55"/><ellipse cx="122" cy="36" rx="7" ry="22" fill="#c8f2e6" fill-opacity=".55"/><ellipse cx="40" cy="4" rx="30" ry="4" fill="#d8f6ec" fill-opacity=".6"/><ellipse cx="100" cy="12" rx="24" ry="4" fill="#58c8a8" fill-opacity=".5"/></g>
<g filter="url(#bl06)"><ellipse cx="64" cy="64.500" rx="46" ry="3.400" fill="#eefafc" fill-opacity=".95"/><path d="M14 66.500h100" stroke="#e86060" stroke-width=".6" stroke-dasharray="1 3" stroke-opacity=".7"/></g>
<rect x="12.100" y="19.100" width="41.600" height="44.300" fill="#b2b8c2"/><rect x="53.700" y="19.100" width="47" height="44.300" fill="#c8e6f6"/><rect x="100.700" y="19.100" width="13.300" height="44.300" fill="#b2b8c2"/>
<g filter="url(#bl04)"><g fill="#d4a466"><path d="M12.1 19.7L26.5 20.2L29.9 23.0L24.3 25.2L22.1 28.5L16.6 28.5L14.4 34.1L12.1 39.6z"/><path d="M12.7 49.6L17.7 47.9L22.1 50.7L21.0 53.5L13.8 53.8z"/><path d="M34.3 23.0L43.2 21.9L52.0 19.7L53.7 20.2L53.7 40.7L52.0 41.8L47.6 38.5L44.3 33.0L39.8 27.4L34.3 27.4z"/><path d="M100.7 19.7L114.0 21.9L114.0 36.3L107.4 39.6L104.1 44.0L100.7 41.8z"/><path d="M107.4 50.1L114.0 49.0L114.0 54.0L108.5 54.0z"/></g><g fill="#f2a844"><path d="M53.7 20.2L56.4 21.9L58.7 28.5L60.9 30.8L56.4 36.3L53.7 38.0z"/><path d="M53.7 39.6L55.3 42.4L53.7 41.8z"/><path d="M59.8 19.1L67.5 19.1L65.3 25.2L62.0 26.3z"/><path d="M55.3 44.0L60.9 42.9L67.5 47.4L65.3 52.9L60.9 57.3L58.1 60.1L56.4 55.1L56.4 49.6z"/><path d="M78.6 26.3L83.0 23.0L89.7 24.1L88.6 29.6L83.0 33.0L77.5 34.1L75.3 30.8z"/><path d="M73.1 39.6L78.6 36.3L87.5 38.5L91.9 44.0L88.6 49.6L85.2 54.0L81.9 54.0L79.7 46.3L73.6 44.0z"/><path d="M87.5 24.1L94.1 20.8L100.7 19.7L100.7 41.8L97.4 43.5L94.1 38.5L89.7 37.4L87.5 31.9z"/><path d="M88.6 49.6L90.2 49.0L89.7 51.8L88.3 51.8z"/></g></g>
<path d="M12.1 19.100v44.300M16.4 19.100v44.300M20.7 19.100v44.300M24.9 19.100v44.300M29.2 19.100v44.300M33.4 19.100v44.300M37.7 19.100v44.300M41.9 19.100v44.300M46.2 19.100v44.300M50.4 19.100v44.300M54.7 19.100v44.300M58.9 19.100v44.300M63.2 19.100v44.300M67.4 19.100v44.300M71.7 19.100v44.300M75.9 19.100v44.300M80.2 19.100v44.300M84.4 19.100v44.300M88.7 19.100v44.300M92.9 19.100v44.300M97.2 19.100v44.300M101.5 19.100v44.300M105.7 19.100v44.300M110.0 19.100v44.300M114.2 19.100v44.300" stroke="#5a6270" stroke-opacity=".38" stroke-width=".5" fill="none"/>
<rect x="12.100" y="61.200" width="101.900" height="2.200" fill="#8a929e" fill-opacity=".55"/>
<path d="M31 19.100v6l-3 5 3 4v12l-1 8 1 9" fill="none" stroke="#f060a8" stroke-width=".7"/><path d="M76.900 19.100v44.300" stroke="#f08a8a" stroke-width=".8" stroke-opacity=".7"/>
<path d="M14 68.800h8" stroke="#f060c0" stroke-width=".7" stroke-opacity=".7"/>
<text x="65.0" y="8.1" text-anchor="middle" direction="rtl" font-size="3.78" fill="#141414" fill-opacity="0.82" textLength="104.7" lengthAdjust="spacingAndGlyphs" font-weight="bold">هر نصف‌النهار نشان‌دهنده یک ساعت اختلاف زمان با گرینویچ است</text><text x="64.3" y="16.9" text-anchor="middle" direction="rtl" font-size="3.78" fill="#141414" fill-opacity="0.82" textLength="125.4" lengthAdjust="spacingAndGlyphs" font-weight="bold">ساعت رسمی کشورها بر اساس نصف‌النهار مبدأ تعیین می‌شود</text></svg></div>
<div class="th" id="slide16" style="left:53px;top:286px"><svg width="128" height="72" viewBox="0 0 128 72" font-family="DejaVu Sans, Liberation Sans, sans-serif"><defs><linearGradient id="g16a" x1="0" y1="0" x2="1" y2="0"><stop offset="0" stop-color="#fdfeff"/><stop offset=".45" stop-color="#f4fafe"/><stop offset=".7" stop-color="#b8c8ee"/><stop offset=".88" stop-color="#8e98dc"/><stop offset="1" stop-color="#9cb0e4"/></linearGradient>
<linearGradient id="g16b" x1="0" y1="0" x2="0" y2="1"><stop offset="0" stop-color="#fff" stop-opacity="0"/><stop offset=".42" stop-color="#a8d4f6" stop-opacity=".5"/><stop offset=".6" stop-color="#3c9ae6"/><stop offset=".78" stop-color="#46b8ea"/><stop offset=".93" stop-color="#9ce4ee"/><stop offset="1" stop-color="#48c2bc"/></linearGradient></defs>
<rect width="128" height="72" fill="url(#g16a)"/><rect width="128" height="72" fill="url(#g16b)"/>
<g filter="url(#bl3)"><path d="M84 36q20-6 48-8v22q-20 0-48 8z" fill="#5ccce4" fill-opacity=".8"/><path d="M22 52q40 4 70 14l40-6v6H22z" fill="#b4e8f2" fill-opacity=".7"/><path d="M22 36q20-2 40 6-20 6-40 4z" fill="#3a8ee4" fill-opacity=".8"/><ellipse cx="52" cy="10" rx="26" ry="12" fill="#fff"/></g>
<rect width="21.900" height="72" fill="#e9e5f4"/>
<g filter="url(#bl06)"><path d="M0 2h4.500l2 4-1 5H0z" fill="#b494cc"/><path d="M4 0h8l-2 3-4 1z" fill="#f0a860"/><path d="M11 0h11v6.500l-5 .5-5-3z" fill="#b8d040"/><path d="M9 4.500h13v6H10z" fill="#a4acd4"/><path d="M0 9q3-4 6-3l4 3 6 4-2 5-6 2 4 4-2 6-5 2-5-2z" fill="#f0dc82"/><path d="M12 13l4 1-2 4-3-1z" fill="#f2c070"/><path d="M0 33l3 1-1 4H0z" fill="#a888c8"/><path d="M4 34q4 0 5 3l-2 6-3 3-2-5z" fill="#f2e692"/><path d="M11 29l3 1 1 3-3 1zM14 36l3 0 0 1.500-3 0zM17 38l3 0 0 1.500-3 0z" fill="#f0b070"/><path d="M8 54h3v2.500H8z" fill="#f0b868"/></g>
<path d="M10.500 14v58" stroke="#8a8a98" stroke-width=".5"/><path d="M0 64.500h10.500V72H0z" fill="#f0d264"/><path d="M10.500 64.500h11.400V72H10.500z" fill="#f0a252"/>
<g filter="url(#bl04)"><path d="M50 29.600h49" stroke="#e81818" stroke-width=".7"/><path d="M48.100 29.600q3.400-3 6.800 0 3.400-3 6.800 0M87.200 29.600q3.400-3 6.800 0 3.400-3 6.800 0" stroke="#d01010" stroke-width="1.700" fill="none"/><circle cx="54.900" cy="30.400" r="1.100" fill="#1a4a18"/><circle cx="94" cy="30.400" r="1.100" fill="#1a4a18"/></g>
<text x="77.2" y="14.7" text-anchor="middle" direction="rtl" font-size="3.78" fill="#141414" fill-opacity="0.82" textLength="82.5" lengthAdjust="spacingAndGlyphs" font-weight="bold">در اول بهار و پاییز طول روز و شب</text><text x="77.5" y="22.9" text-anchor="middle" direction="rtl" font-size="3.78" fill="#141414" fill-opacity="0.82" textLength="68.6" lengthAdjust="spacingAndGlyphs" font-weight="bold">خورشید در تابستان بر مدار رأس‌السرطان عمود می‌تابد</text><text x="77.0" y="41.0" text-anchor="middle" direction="rtl" font-size="3.78" fill="#141414" fill-opacity="0.82" textLength="101.0" lengthAdjust="spacingAndGlyphs" font-weight="bold">زمین در هر ۲۴ ساعت یک بار به دور خود می‌چرخد</text><text x="77.5" y="49.8" text-anchor="middle" direction="rtl" font-size="3.78" fill="#141414" fill-opacity="0.82" textLength="91.0" lengthAdjust="spacingAndGlyphs" font-weight="bold">حرکت وضعی زمین از غرب به شرق است و خورشید</text></svg></div>
<svg class="star" width="12" height="11" style="left:54.5px;top:369px"><use href="#star" x="1.3" y="0.3" fill="#5a5a5a"/><path d="M.2 2.800h1.500M.4 5h1.300" stroke="#777" stroke-width=".8"/></svg>
<div class="th" id="slide17" style="left:1208px;top:411px"><svg width="128" height="72" viewBox="0 0 128 72" font-family="DejaVu Sans, Liberation Sans, sans-serif"><defs><linearGradient id="g17a" x1="0" y1="0" x2="1" y2="1"><stop offset="0" stop-color="#f8a4c8"/><stop offset=".5" stop-color="#fbc4dc"/><stop offset="1" stop-color="#f6a8cc"/></linearGradient></defs>
<rect width="128" height="72" fill="url(#g17a)"/>
<g filter="url(#bl2)"><ellipse cx="20" cy="10" rx="14" ry="6" fill="#fde0ec" fill-opacity=".9"/><ellipse cx="110" cy="30" rx="14" ry="8" fill="#fde4f0" fill-opacity=".8"/><ellipse cx="116" cy="60" rx="12" ry="10" fill="#fff" fill-opacity=".7"/><ellipse cx="12" cy="52" rx="12" ry="12" fill="#f490b8" fill-opacity=".6"/><ellipse cx="66" cy="6" rx="26" ry="5" fill="#fcd4e4" fill-opacity=".8"/><circle cx="114" cy="42" r="5" fill="#c8b0f0" fill-opacity=".6"/><circle cx="20" cy="56" r="3" fill="#d0c0f8" fill-opacity=".7"/><circle cx="14" cy="30" r="4" fill="#fce890" fill-opacity=".5"/></g>
<rect x="23.800" y="25.800" width="2.400" height="46.200" fill="#b4b8f4"/><rect x="26" y="25.800" width="15.500" height="46.200" fill="#fdfdb8"/><rect x="41.500" y="25.800" width="15.800" height="46.200" fill="#f4b8f4"/><rect x="57.300" y="25.800" width="16" height="46.200" fill="#c8f0c8"/><rect x="73.300" y="25.800" width="15.600" height="46.200" fill="#f8b8b8"/><rect x="88.900" y="25.800" width="15.200" height="46.200" fill="#b8b8fa"/>
<path d="M33.500 25.800v46.200M49.500 25.800v46.200M65 25.800v46.200M81 25.800v46.200M96.500 25.800v46.200" stroke="#888" stroke-width=".3" stroke-opacity=".6"/>
<g filter="url(#bl04)"><path d="M32.1 46.8L38.7 44.0L39.8 38.5L44.8 34.6L49.8 38.5L56.4 41.8L63.1 43.5L69.7 42.4L77.5 38.5L81.9 35.7L76.4 34.1L77.5 30.8L81.9 29.1L86.3 30.8L89.7 34.6L96.9 35.2L94.7 39.6L89.7 41.3L85.2 44.6L81.9 47.4L84.1 49.0L83.0 54.0L85.2 57.3L83.6 62.9L78.6 66.2L74.2 68.4L69.7 67.9L67.5 65.6L63.1 67.9L58.7 67.3L57.6 62.9L56.4 60.7L49.8 61.2L45.4 59.5L38.7 57.3L35.4 52.3L32.6 49.6z" fill="#fe0000"/><path d="M68.1 69.5L70.8 68.4L70.3 71.2z" fill="#fe0000"/></g>
<text x="58.600" y="47.200" font-size="3.400" fill="#6a0000" fill-opacity=".85" font-weight="bold" textLength="21" lengthAdjust="spacingAndGlyphs">Beijing Time</text>
<g font-size="2.800" fill="#222" font-weight="bold"><text x="33" y="29.400">+5</text><text x="48.600" y="29.400">+6</text><text x="64.500" y="29.400">+7</text><text x="80" y="29.400">+8</text><text x="96" y="29.400">+9</text></g>
<text x="66.5" y="9.5" text-anchor="middle" direction="rtl" font-size="3.78" fill="#141414" fill-opacity="0.82" textLength="99.0" lengthAdjust="spacingAndGlyphs" font-weight="bold">حرکت انتقالی زمین به دور خورشید باعث پیدایش فصل‌ها می‌شود</text><text x="66.5" y="17.1" text-anchor="middle" direction="rtl" font-size="3.78" fill="#141414" fill-opacity="0.82" textLength="111.0" lengthAdjust="spacingAndGlyphs" font-weight="bold">مدار زمین بیضی شکل است و محور آن نسبت به سطح مدار</text><text x="67.0" y="25.1" text-anchor="middle" direction="rtl" font-size="3.78" fill="#141414" fill-opacity="0.82" textLength="56.0" lengthAdjust="spacingAndGlyphs" font-weight="bold">هر نصف‌النهار نشان‌دهنده یک ساعت اختلاف</text></svg></div>
<div class="th" id="slide18" style="left:1043px;top:411px"><svg width="128" height="72" viewBox="0 0 128 72" font-family="DejaVu Sans, Liberation Sans, sans-serif"><rect width="128" height="72" fill="#fff"/>
<path d="M0 .900h128" stroke="#777" stroke-width=".5"/><path d="M3.5 .8v63.400M8.5 .8v63.400M13.5 .8v63.400M19.5 .8v63.400M24.5 .8v63.400M29.5 .8v63.400M34.5 .8v63.400M39.5 .8v63.400M45.5 .8v63.400M50.5 .8v63.400M55.5 .8v63.400M60.5 .8v63.400M66.5 .8v63.400M71.5 .8v63.400M76.5 .8v63.400M81.5 .8v63.400M87.5 .8v63.400M92.5 .8v63.400M97.5 .8v63.400M102.5 .8v63.400M108.5 .8v63.400M113.5 .8v63.400M118.5 .8v63.400M123.5 .8v63.400" stroke="#a4a4a4" stroke-width="1" shape-rendering="crispEdges"/>
<g filter="url(#bl04)"><path d="M0.9 9.2L4.4 9.7L3.8 11.7L1.1 11.0z" fill="#18e8e8"/><path d="M6.1 9.2L14.4 8.6L14.9 12.5L9.4 14.1L6.4 12.5z" fill="#f418a4"/><path d="M14.4 8.6L23.2 7.5L26.5 10.8L25.4 25.2L21.6 21.9L16.6 15.8L14.6 12.5z" fill="#8a2cc0"/><path d="M20.5 6.4L33.2 4.7L34.3 9.7L28.8 14.1L29.3 27.4L25.4 25.2L23.8 17.5L19.0 10.8z" fill="#8060f0"/><path d="M27.1 11.9L33.7 10.8L34.9 18.6L34.3 28.5L31.0 29.1L27.1 25.2z" fill="#3060f0"/><path d="M32.6 8.6L40.4 7.5L42.6 13.6L38.7 19.7L35.4 24.7L33.7 18.6L32.1 14.1z" fill="#20f0f0"/><path d="M34.3 4.2L39.8 3.6L39.3 7.5L34.9 7.5z" fill="#20c8e8"/><path d="M30.4 25.2L34.3 25.2L36.5 29.1L34.3 30.2L31.0 28.5z" fill="#ffffff"/><path d="M32.1 28.5L36.5 29.6L39.8 33.0L36.5 33.5z" fill="#2848c8"/><path d="M39.8 4.2L57.6 3.6L56.4 7.5L52.0 10.8L47.6 12.5L43.2 9.7z" fill="#0a8a10"/><path d="M35.4 33.5L39.3 32.4L40.4 40.7L37.6 42.4L35.6 38.5z" fill="#1fa8b0"/><path d="M38.7 31.9L45.4 33.0L50.9 37.4L50.4 41.8L47.6 45.1L42.0 44.0L39.8 40.7z" fill="#18b030"/><path d="M41.5 38.0L46.5 38.5L45.9 42.9L42.0 42.9z" fill="#22f044"/><path d="M39.8 44.0L47.6 45.1L45.4 50.7L42.0 54.0L39.8 57.6L37.1 55.7L38.2 49.6z" fill="#0a6a10"/><path d="M60.9 13.6L66.4 8.6L74.2 8.6L75.3 16.4L71.9 21.9L65.3 23.0L60.9 19.7z" fill="#8a1090"/><path d="M67.5 7.5L73.1 5.1L74.2 8.6L69.7 9.7z" fill="#a040c0"/><path d="M71.9 9.7L84.1 8.6L84.1 17.5L78.6 19.7L74.2 17.5z" fill="#3060f0"/><path d="M71.9 17.5L78.6 19.7L77.5 25.2L73.1 25.2z" fill="#8060e0"/><path d="M58.1 26.3L62.0 22.4L74.2 24.1L71.9 38.5L69.7 44.0L67.5 36.3L60.9 33.5L58.1 30.8z" fill="#6a0a78"/><path d="M69.7 25.2L77.5 25.2L77.5 38.5L75.3 47.4L71.4 49.0L69.2 40.7L71.9 36.3z" fill="#6a50d0"/><path d="M74.2 25.2L81.9 27.4L83.0 33.0L78.6 40.7L76.4 41.8L75.3 34.1z" fill="#2040d0"/><path d="M79.1 41.8L81.4 40.7L80.8 45.1L78.9 45.7z" fill="#2040d0"/><path d="M79.7 21.3L85.2 21.9L85.2 25.8L80.3 25.2z" fill="#f06010"/><path d="M80.8 9.7L91.9 8.1L92.4 14.1L89.7 19.7L81.9 20.2L80.3 15.8z" fill="#20f020"/><path d="M81.9 17.5L89.7 16.9L90.2 22.4L85.2 23.6L82.5 21.3z" fill="#0a8a10"/><path d="M90.2 7.5L101.8 5.8L102.4 13.0L98.5 15.8L91.3 16.6z" fill="#f8f800"/><path d="M101.8 8.1L109.6 8.1L110.2 16.9L105.2 18.6L101.3 14.1z" fill="#901098"/><path d="M96.3 13.6L104.1 13.0L104.6 18.6L96.9 18.6z" fill="#f41890"/><path d="M89.7 17.5L106.3 16.9L109.0 20.8L105.2 26.3L97.4 28.0L91.3 24.1z" fill="#c41070"/><path d="M88.6 22.4L94.7 23.0L93.0 30.2L91.3 33.2L89.1 27.4z" fill="#c05010"/><path d="M96.9 27.4L101.8 27.4L102.4 34.1L99.1 37.4L97.4 33.0z" fill="#909010"/><path d="M105.2 27.4L107.4 28.5L107.9 34.1L105.7 33.5z" fill="#b01880"/><path d="M101.8 35.2L107.4 35.7L117.4 37.4L116.8 40.2L107.4 39.1L102.4 38.5z" fill="#a03090"/><path d="M109.6 8.6L114.0 8.6L114.6 17.5L110.2 17.2z" fill="#8060f0"/><path d="M112.9 8.6L120.7 8.4L120.1 13.0L113.5 13.3z" fill="#3060f0"/><path d="M119.6 8.6L127.1 8.6L126.2 12.5L120.1 15.8L119.0 13.0z" fill="#20f0f0"/><path d="M107.4 19.7L112.9 17.5L113.5 21.9L109.0 23.6z" fill="#7030a0"/><path d="M103.0 43.5L109.0 41.3L110.2 49.0L104.1 49.6z" fill="#c41068"/><path d="M108.5 40.7L112.7 40.7L113.1 50.1L109.8 49.0z" fill="#f06010"/><path d="M111.8 40.7L116.2 42.4L117.4 48.5L114.6 51.2L112.7 50.1z" fill="#7060e0"/><path d="M121.8 51.8L125.3 49.0L126.2 50.7L122.9 54.0z" fill="#20d8e8"/></g>
<g><rect x="0.0" y="64" width="3.2" height="6.500" fill="#18d8d8"/><rect x="3.1" y="64" width="5.3" height="6.500" fill="#ffffff"/><rect x="8.3" y="64" width="5.6" height="6.500" fill="#f4f420"/><rect x="13.8" y="64" width="5.3" height="6.500" fill="#ec18a8"/><rect x="19.0" y="64" width="5.2" height="6.500" fill="#8a18a0"/><rect x="24.1" y="64" width="5.3" height="6.500" fill="#7060e0"/><rect x="29.3" y="64" width="5.6" height="6.500" fill="#3060f0"/><rect x="34.9" y="64" width="5.1" height="6.500" fill="#18e8e8"/><rect x="39.8" y="64" width="5.4" height="6.500" fill="#20e030"/><rect x="45.1" y="64" width="5.3" height="6.500" fill="#0a7a18"/><rect x="50.4" y="64" width="5.6" height="6.500" fill="#ffffff"/><rect x="55.9" y="64" width="5.1" height="6.500" fill="#f4f420"/><rect x="60.9" y="64" width="5.4" height="6.500" fill="#ec18a8"/><rect x="66.2" y="64" width="5.3" height="6.500" fill="#8a18a0"/><rect x="71.4" y="64" width="5.6" height="6.500" fill="#7060e0"/><rect x="76.9" y="64" width="5.1" height="6.500" fill="#3060f0"/><rect x="81.9" y="64" width="5.4" height="6.500" fill="#18e8e8"/><rect x="87.2" y="64" width="5.3" height="6.500" fill="#20e030"/><rect x="92.4" y="64" width="5.6" height="6.500" fill="#0a7a18"/><rect x="98.0" y="64" width="5.1" height="6.500" fill="#f4f420"/><rect x="103.0" y="64" width="5.4" height="6.500" fill="#ec18a8"/><rect x="108.3" y="64" width="5.3" height="6.500" fill="#8a18a0"/><rect x="113.5" y="64" width="5.1" height="6.500" fill="#7060e0"/><rect x="118.5" y="64" width="5.6" height="6.500" fill="#3060f0"/><rect x="124.0" y="64" width="4.1" height="6.500" fill="#18d0d0"/></g>
<g font-size="1.900" fill="#111" font-weight="bold" fill-opacity=".8"><text x="4.2" y="66.800">-11</text><text x="4.2" y="69.600">2</text><text x="9.4" y="66.800">-10</text><text x="9.4" y="69.600">3</text><text x="14.9" y="66.800">-9</text><text x="14.9" y="69.600">4</text><text x="20.1" y="66.800">-8</text><text x="20.1" y="69.600">5</text><text x="25.2" y="66.800">-7</text><text x="25.2" y="69.600">6</text><text x="30.4" y="66.800">-6</text><text x="30.4" y="69.600">7</text><text x="36.0" y="66.800">-5</text><text x="36.0" y="69.600">8</text><text x="40.9" y="66.800">-4</text><text x="40.9" y="69.600">9</text><text x="46.2" y="66.800">-3</text><text x="46.2" y="69.600">10</text><text x="51.5" y="66.800">-2</text><text x="51.5" y="69.600">11</text><text x="57.0" y="66.800">-1</text><text x="57.0" y="69.600">12</text><text x="62.0" y="66.800">+0</text><text x="62.0" y="69.600">1</text><text x="67.3" y="66.800">+1</text><text x="67.3" y="69.600">2</text><text x="72.5" y="66.800">+2</text><text x="72.5" y="69.600">3</text><text x="78.0" y="66.800">+3</text><text x="78.0" y="69.600">4</text><text x="83.0" y="66.800">+4</text><text x="83.0" y="69.600">5</text><text x="88.3" y="66.800">+5</text><text x="88.3" y="69.600">6</text><text x="93.5" y="66.800">+6</text><text x="93.5" y="69.600">7</text><text x="99.1" y="66.800">+7</text><text x="99.1" y="69.600">8</text><text x="104.1" y="66.800">+8</text><text x="104.1" y="69.600">9</text><text x="109.4" y="66.800">+9</text><text x="109.4" y="69.600">10</text><text x="114.6" y="66.800">+10</text><text x="114.6" y="69.600">11</text><text x="119.6" y="66.800">+11</text><text x="119.6" y="69.600">12</text></g>
<rect x="62.0" y="55.1" width="3.200" height="3.400" fill="#9a9a9a"/><rect x="62.0" y="59.0" width="3.200" height="3.600" fill="#e87030"/>
<g font-size="2.500" fill="#1a1a1a" font-weight="bold"><text x="11.0" y="19.1">North</text><text x="10.6" y="21.7">America</text><text x="28.2" y="43.3">South</text><text x="27.4" y="46.3">America</text><text x="59.5" y="38.1">Africa</text><text x="53.7" y="18.1">Europe</text><text x="111.3" y="25.5">Asia</text><text x="100.2" y="55.6">Australia/Oceania</text></g>
<g font-size="1.800" fill="#555"><text x="67.0" y="57.6">Time Zones (Standard Time)</text><text x="67.0" y="61.5">International Date Line</text><text x="1.5" y="61.5">WORLD TIME ZONES MAP</text></g></svg></div>
<svg class="star" width="12" height="11" style="left:1044.5px;top:494px"><use href="#star" x="1.3" y="0.3" fill="#5a5a5a"/><path d="M.2 2.800h1.500M.4 5h1.300" stroke="#777" stroke-width=".8"/></svg>
<div class="th" id="slide19" style="left:878px;top:411px"><svg width="128" height="72" viewBox="0 0 128 72" font-family="DejaVu Sans, Liberation Sans, sans-serif"><rect width="128" height="72" fill="#fff"/>
<g filter="url(#bl12)"><path d="M12 -2h14q-12 14-6 32 8 20 12 44h-8q-2-22-10-40-6-18-2-36z" fill="#f2b892"/><path d="M0 8l5 2-5 4z" fill="#38b8e0"/><path d="M0 24q6 0 8 6l-8 4z" fill="#f8e060"/><path d="M0 40q8 2 12 10l-12 2z" fill="#f4a8c0"/><path d="M2 56q8-2 12 4l-6 8-8-2z" fill="#8cd850"/><path d="M12 46q6 2 8 10l-6 2z" fill="#f8e458"/><path d="M0 66h16v6H0z" fill="#f060a0"/><path d="M14 62q6 2 8 10h-8z" fill="#f8d040"/><path d="M0 14q4 4 4 8l-4 2z" fill="#f8c040"/><path d="M20 60q4 4 10 12h-8z" fill="#f09080"/></g>
<text x="75.0" y="9.1" text-anchor="middle" direction="rtl" font-size="3.78" fill="#141414" fill-opacity="0.82" textLength="56.0" lengthAdjust="spacingAndGlyphs" font-weight="bold">ساعت رسمی کشورها بر اساس نصف‌النهار</text><text x="73.5" y="18.0" text-anchor="middle" direction="rtl" font-size="3.78" fill="#141414" fill-opacity="0.82" textLength="107.0" lengthAdjust="spacingAndGlyphs" font-weight="bold">در اول بهار و پاییز طول روز و شب در همه جا</text><text x="73.5" y="25.5" text-anchor="middle" direction="rtl" font-size="3.78" fill="#141414" fill-opacity="0.82" textLength="107.0" lengthAdjust="spacingAndGlyphs" font-weight="bold">خورشید در تابستان بر مدار رأس‌السرطان عمود می‌تابد</text><text x="73.5" y="33.0" text-anchor="middle" direction="rtl" font-size="3.78" fill="#141414" fill-opacity="0.82" textLength="107.0" lengthAdjust="spacingAndGlyphs" font-weight="bold">زمین در هر ۲۴ ساعت یک بار به دور خود می‌چرخد و</text><text x="73.5" y="40.0" text-anchor="middle" direction="rtl" font-size="3.78" fill="#141414" fill-opacity="0.82" textLength="107.0" lengthAdjust="spacingAndGlyphs" font-weight="bold">حرکت وضعی زمین از غرب به شرق است و خورشید از شرق</text><text x="93.5" y="47.0" text-anchor="middle" direction="rtl" font-size="3.78" fill="#141414" fill-opacity="0.82" textLength="67.0" lengthAdjust="spacingAndGlyphs" font-weight="bold">حرکت انتقالی زمین به دور خورشید باعث</text><text x="73.5" y="54.0" text-anchor="middle" direction="rtl" font-size="3.78" fill="#141414" fill-opacity="0.82" textLength="107.0" lengthAdjust="spacingAndGlyphs" font-weight="bold">مدار زمین بیضی شکل است و محور آن نسبت به سطح مدار</text><text x="86.5" y="61.0" text-anchor="middle" direction="rtl" font-size="3.78" fill="#141414" fill-opacity="0.82" textLength="81.0" lengthAdjust="spacingAndGlyphs" font-weight="bold">هر نصف‌النهار نشان‌دهنده یک ساعت اختلاف زمان با گرینویچ</text></svg></div>
<svg class="star" width="12" height="11" style="left:879.5px;top:494px"><use href="#star" x="1.3" y="0.3" fill="#5a5a5a"/><path d="M.2 2.800h1.500M.4 5h1.300" stroke="#777" stroke-width=".8"/></svg>
<div class="th" id="slide20" style="left:713px;top:411px"><svg width="128" height="72" viewBox="0 0 128 72" font-family="DejaVu Sans, Liberation Sans, sans-serif"><defs><radialGradient id="g20a" cx=".5" cy=".5" r=".8"><stop offset="0" stop-color="#f9c48c"/><stop offset=".6" stop-color="#f7b674"/><stop offset="1" stop-color="#f5aa60"/></radialGradient>
<radialGradient id="g20b" cx=".5" cy=".5" r=".55"><stop offset="0" stop-color="#1c3260"/><stop offset=".7" stop-color="#12244c"/><stop offset="1" stop-color="#060c1e"/></radialGradient></defs>
<rect width="128" height="72" fill="url(#g20a)"/>
<g filter="url(#bl2)" fill="#fde4b8" fill-opacity=".65"><circle cx="20" cy="6" r="5"/><circle cx="56" cy="4" r="4"/><circle cx="96" cy="8" r="5"/><circle cx="120" cy="20" r="4"/><circle cx="10" cy="62" r="5"/><circle cx="44" cy="64" r="4"/><circle cx="84" cy="62" r="5"/><circle cx="116" cy="58" r="5"/><circle cx="70" cy="14" r="3"/><circle cx="122" cy="44" r="3"/></g>
<g filter="url(#bl2)" fill="#f08c3c" fill-opacity=".4"><circle cx="36" cy="10" r="5"/><circle cx="108" cy="66" r="6"/><circle cx="64" cy="66" r="5"/><circle cx="4" cy="30" r="4"/></g>
<rect x="4" y="18.400" width="48.900" height="35.600" fill="#000"/>
<circle cx="28" cy="36" r="16.500" fill="url(#g20b)" stroke="#7a8aa8" stroke-width=".5"/>
<path d="M28 19.500v33M11.500 36h33" stroke="#2a9a3a" stroke-width=".5" stroke-opacity=".85"/>
<g fill="none" stroke="#6a84b0" stroke-width=".3"><ellipse cx="28" cy="36" rx="8" ry="16.500"/><path d="M13 28h30M13 44h30"/></g>
<path d="M13 42q4-2 6 2l-2 4q-4-2-4-6z" fill="#d88840" filter="url(#bl06)"/>
<text x="28" y="34" text-anchor="middle" font-size="3" font-weight="bold" fill="#20d020" textLength="24" lengthAdjust="spacingAndGlyphs">The International</text><text x="28" y="37.600" text-anchor="middle" font-size="3" font-weight="bold" fill="#20d020">Date Line</text>
<text x="90.5" y="20.5" text-anchor="middle" direction="rtl" font-size="3.78" fill="#141414" fill-opacity="0.82" textLength="71.0" lengthAdjust="spacingAndGlyphs" font-weight="bold">ساعت رسمی کشورها بر اساس نصف‌النهار مبدأ تعیین</text><text x="90.5" y="28.0" text-anchor="middle" direction="rtl" font-size="3.78" fill="#141414" fill-opacity="0.82" textLength="71.0" lengthAdjust="spacingAndGlyphs" font-weight="bold">در اول بهار و پاییز طول روز و</text><text x="90.5" y="35.0" text-anchor="middle" direction="rtl" font-size="3.78" fill="#141414" fill-opacity="0.82" textLength="71.0" lengthAdjust="spacingAndGlyphs" font-weight="bold">خورشید در تابستان بر مدار رأس‌السرطان عمود می‌تابد</text><text x="90.5" y="42.0" text-anchor="middle" direction="rtl" font-size="3.78" fill="#141414" fill-opacity="0.82" textLength="71.0" lengthAdjust="spacingAndGlyphs" font-weight="bold">زمین در هر ۲۴ ساعت یک بار به</text><text x="90.5" y="49.0" text-anchor="middle" direction="rtl" font-size="3.78" fill="#141414" fill-opacity="0.82" textLength="71.0" lengthAdjust="spacingAndGlyphs" font-weight="bold">حرکت وضعی زمین از غرب به شرق است</text></svg></div>
<svg class="star" width="12" height="11" style="left:714.5px;top:494px"><use href="#star" x="1.3" y="0.3" fill="#5a5a5a"/><path d="M.2 2.800h1.500M.4 5h1.300" stroke="#777" stroke-width=".8"/></svg>
<div class="th hov" id="slide21" style="left:548px;top:411px"><svg width="128" height="72" viewBox="0 0 128 72" font-family="DejaVu Sans, Liberation Sans, sans-serif"><defs><radialGradient id="g21a" cx=".4" cy=".35" r=".7"><stop offset="0" stop-color="#fbc050"/><stop offset=".5" stop-color="#ee7c10"/><stop offset="1" stop-color="#a84808"/></radialGradient>
<linearGradient id="g21b" x1="0" y1="0" x2="0" y2="1"><stop offset="0" stop-color="#8a2aa0"/><stop offset=".45" stop-color="#7a2492"/><stop offset="1" stop-color="#c48ad4"/></linearGradient></defs>
<rect width="128" height="72" fill="#fff"/>
<g filter="url(#bl3)"><path d="M-4 34q14-8 30 0 10 10 6 24-10 12-36 10z" fill="#f9c4c8" fill-opacity=".85"/><path d="M10 6q14-6 30 0l-10 14q-14 0-20-14z" fill="#fde4e2" fill-opacity=".9"/><path d="M100 56q14-14 32-16v36h-36z" fill="#f9c8cc" fill-opacity=".85"/><path d="M20 60q20 4 30 16H10z" fill="#fbd4d6" fill-opacity=".8"/><path d="M84 20q20-6 40 4l-20 10z" fill="#fdeeee" fill-opacity=".8"/></g>
<path d="M54.300 3.100h22.600v7.300q0 3.200-3.200 3.200H51.100V6.300q0-3.200 3.200-3.200z" fill="url(#g21b)" stroke="#3a6ab8" stroke-width=".8"/>
<rect x="40.600" y="39.700" width="45.400" height="30.300" fill="#fff"/>
<circle cx="61" cy="52.200" r="5.500" fill="url(#g21a)"/><circle cx="71.700" cy="46" r="3" fill="#4a8aa8"/><circle cx="71.200" cy="45.400" r="1.400" fill="#8ac0a0"/>
<text x="64.0" y="10.0" text-anchor="middle" direction="rtl" font-size="3.1" fill="#100010" fill-opacity="0.9" textLength="20.0" lengthAdjust="spacingAndGlyphs" font-weight="bold">حرکت انتقالی</text><text x="64.5" y="20.0" text-anchor="middle" direction="rtl" font-size="3.78" fill="#141414" fill-opacity="0.82" textLength="118.0" lengthAdjust="spacingAndGlyphs" font-weight="bold">حرکت انتقالی زمین به دور خورشید باعث پیدایش فصل‌ها می‌شود</text><text x="32.2" y="28.3" text-anchor="middle" direction="rtl" font-size="3.78" fill="#141414" fill-opacity="0.82" textLength="43.5" lengthAdjust="spacingAndGlyphs" font-weight="bold">مدار زمین بیضی شکل است</text><text x="75.8" y="28.3" text-anchor="middle" direction="rtl" font-size="3.78" fill="#1a1ae0" fill-opacity="0.9" textLength="41.0" lengthAdjust="spacingAndGlyphs" font-weight="bold">به دور خورشید</text><text x="107.5" y="28.3" text-anchor="middle" direction="rtl" font-size="3.78" fill="#141414" fill-opacity="0.82" textLength="19.9" lengthAdjust="spacingAndGlyphs" font-weight="bold">زمین در مدار</text><text x="64.5" y="36.9" text-anchor="middle" direction="rtl" font-size="3.78" fill="#141414" fill-opacity="0.82" textLength="35.0" lengthAdjust="spacingAndGlyphs" font-weight="bold">هر نصف‌النهار نشان‌دهنده یک</text></svg></div>
<svg class="star" width="12" height="11" style="left:549.5px;top:494px"><use href="#star" x="1.3" y="0.3" fill="#5a5a5a"/><path d="M.2 2.800h1.500M.4 5h1.300" stroke="#777" stroke-width=".8"/></svg>
<div class="th" id="slide22" style="left:383px;top:411px"><svg width="128" height="72" viewBox="0 0 128 72" font-family="DejaVu Sans, Liberation Sans, sans-serif"><defs><linearGradient id="g22a" x1="0" y1="0" x2="1" y2="0"><stop offset="0" stop-color="#e8e6f6"/><stop offset=".45" stop-color="#dedcf2"/><stop offset=".8" stop-color="#c4d4f2"/><stop offset="1" stop-color="#b0c8ee"/></linearGradient>
<radialGradient id="g22b" cx=".5" cy=".5" r=".5"><stop offset="0" stop-color="#fff8a0"/><stop offset=".35" stop-color="#fadc28"/><stop offset=".6" stop-color="#e8a808" stop-opacity=".7"/><stop offset="1" stop-color="#6a5a00" stop-opacity="0"/></radialGradient>
<linearGradient id="g22c" x1="0" y1="1" x2="1" y2="0"><stop offset="0" stop-color="#000" stop-opacity="0"/><stop offset=".42" stop-color="#5a564c" stop-opacity=".2"/><stop offset=".6" stop-color="#a49c8a"/><stop offset=".78" stop-color="#8a8070"/><stop offset="1" stop-color="#3a362e"/></linearGradient></defs>
<rect width="128" height="72" fill="url(#g22a)"/>
<g filter="url(#bl2)"><path d="M66 -2q30 4 66 24v-24z" fill="#bcd0f4" fill-opacity=".9"/><path d="M-2 -2h30q20 10 40 26H-2z" fill="#f0eefa" fill-opacity=".8"/><path d="M10 0q30 4 50 22" stroke="#d0cce8" stroke-width="3" fill="none"/></g>
<svg x="0" y="23.300" width="80" height="48.700" viewBox="0 23.300 80 48.700"><rect x="0" y="23.300" width="80" height="48.700" fill="#020202"/>
<g filter="url(#bl2)"><path d="M30 76l22-22 10-16 12-10 10-4v52z" fill="#6a645a"/><path d="M48 74l16-20 16-18v12l-14 14-8 14z" fill="#a39b88"/><path d="M56 60q6-8 14-10l-10 14z" fill="#4a463c"/><path d="M66 46q6-6 14-8v6z" fill="#5a5448"/><path d="M74 28l8-4v14z" fill="#c8b898"/></g>
<g filter="url(#bl12)"><ellipse cx="31.500" cy="44.600" rx="18.800" ry="8.900" fill="#0b2408"/></g>
<circle cx="40" cy="43.500" r="5.200" fill="url(#g22b)"/><circle cx="13.500" cy="43.100" r="1" fill="#4a78c8" fill-opacity=".9"/></svg>
<svg x="83" y="27.200" width="43" height="40.600" viewBox="83 27.200 43 40.600"><rect x="83" y="27.200" width="43" height="40.600" fill="#020204"/>
<path d="M126 35.800q-16-2.600-30-1.800-10 1.200-7.400 5.600 6 9.600 37.400 17" fill="none" stroke="#857c96" stroke-width=".9" filter="url(#bl04)"/>
<circle cx="124.600" cy="40.200" r="3.500" fill="#f8de48"/><circle cx="125.600" cy="40.200" r="2" fill="#fbb040"/></svg>
<text x="64.3" y="14.8" text-anchor="middle" direction="rtl" font-size="3.78" fill="#141414" fill-opacity="0.82" textLength="125.4" lengthAdjust="spacingAndGlyphs" font-weight="bold">ساعت رسمی کشورها بر اساس نصف‌النهار مبدأ تعیین می‌شود</text></svg></div>
<svg class="star" width="12" height="11" style="left:384.5px;top:494px"><use href="#star" x="1.3" y="0.3" fill="#5a5a5a"/><path d="M.2 2.800h1.500M.4 5h1.300" stroke="#777" stroke-width=".8"/></svg>
<div class="th" id="slide23" style="left:218px;top:411px"><svg width="128" height="72" viewBox="0 0 128 72" font-family="DejaVu Sans, Liberation Sans, sans-serif"><defs><linearGradient id="g23a" x1="0" y1="0" x2="0" y2="1"><stop offset="0" stop-color="#c4e2f4"/><stop offset=".2" stop-color="#dceef8"/><stop offset=".6" stop-color="#eef6fb"/><stop offset="1" stop-color="#f6fafd"/></linearGradient></defs>
<rect width="128" height="72" fill="url(#g23a)"/>
<g filter="url(#bl3)"><ellipse cx="30" cy="4" rx="30" ry="5" fill="#b0d8f0" fill-opacity=".8"/><ellipse cx="100" cy="50" rx="24" ry="8" fill="#fff" fill-opacity=".8"/><ellipse cx="20" cy="40" rx="20" ry="8" fill="#fff" fill-opacity=".7"/><ellipse cx="64" cy="66" rx="50" ry="6" fill="#e4f0f8"/></g>
<g filter="url(#bl12)"><path d="M100 4q6 0 8 5-4 3-8-1z" fill="#f4b090"/><path d="M108 9q8-2 12 4-4 8-12 4z" fill="#f8f090"/><path d="M96 16q5-2 8 2-3 4-8 2z" fill="#c8a0e8"/><path d="M106 18q6 0 8 4-6 3-8-4z" fill="#f4a0d0"/><path d="M98 26q6-2 10 2-4 6-10 2z" fill="#f8dcc0"/><path d="M102 13l3 1-2 2z" fill="#60c880"/></g>
<g filter="url(#bl06)"><path d="M42 31h38" stroke="#6a9a50" stroke-width="2.400"/><g fill="#a850c0"><circle cx="45" cy="31" r="1.500"/><circle cx="52" cy="31" r="1.500"/><circle cx="59" cy="31" r="1.500"/><circle cx="66" cy="31" r="1.500"/><circle cx="73" cy="31" r="1.500"/><circle cx="79" cy="31" r="1.500"/></g></g>
<text x="64.5" y="14.1" text-anchor="middle" direction="rtl" font-size="3.78" fill="#141414" fill-opacity="0.82" textLength="123.0" lengthAdjust="spacingAndGlyphs" font-weight="bold">در اول بهار و پاییز طول روز و شب در همه جا برابر است</text><text x="81.0" y="23.5" text-anchor="middle" direction="rtl" font-size="3.78" fill="#141414" fill-opacity="0.82" textLength="62.0" lengthAdjust="spacingAndGlyphs" font-weight="bold">خورشید در تابستان بر مدار رأس‌السرطان عمود</text><text x="21.0" y="23.5" text-anchor="middle" direction="rtl" font-size="3.78" fill="#141414" fill-opacity="0.82" textLength="14.0" lengthAdjust="spacingAndGlyphs" font-weight="bold">سال شمسی</text><text x="35.0" y="23.0" text-anchor="middle" direction="rtl" font-size="3.78" fill="#1a1ae0" fill-opacity="0.82" textLength="10.0" lengthAdjust="spacingAndGlyphs" font-weight="bold">ـــــــ</text><text x="66.0" y="40.0" text-anchor="middle" direction="rtl" font-size="3.78" fill="#141414" fill-opacity="0.82" textLength="108.0" lengthAdjust="spacingAndGlyphs" font-weight="bold">زمین در هر ۲۴ ساعت یک بار به دور خود می‌چرخد و</text><text x="65.0" y="48.5" text-anchor="middle" direction="rtl" font-size="3.78" fill="#141414" fill-opacity="0.82" textLength="26.0" lengthAdjust="spacingAndGlyphs" font-weight="bold">حرکت وضعی زمین</text><text x="76.0" y="60.0" text-anchor="middle" direction="rtl" font-size="3.78" fill="#1a1ae0" fill-opacity="0.9" textLength="32.0" lengthAdjust="spacingAndGlyphs" font-weight="bold">سال ۳۶۶ روزه</text><text x="45.0" y="60.0" text-anchor="middle" direction="rtl" font-size="3.78" fill="#141414" fill-opacity="0.82" textLength="26.0" lengthAdjust="spacingAndGlyphs" font-weight="bold">کبیسه می‌نامند</text></svg></div>
<svg class="star" width="12" height="11" style="left:219.5px;top:494px"><use href="#star" x="1.3" y="0.3" fill="#5a5a5a"/><path d="M.2 2.800h1.500M.4 5h1.300" stroke="#777" stroke-width=".8"/></svg>
<div class="th" id="slide24" style="left:53px;top:411px"><svg width="128" height="72" viewBox="0 0 128 72" font-family="DejaVu Sans, Liberation Sans, sans-serif"><defs><radialGradient id="g24a" cx=".5" cy=".15" r=".9"><stop offset="0" stop-color="#d4eeff"/><stop offset=".3" stop-color="#9cd4fb"/><stop offset="1" stop-color="#44a8f6"/></radialGradient>
<radialGradient id="g24b" cx=".35" cy=".35" r=".75"><stop offset="0" stop-color="#c0dcf6"/><stop offset=".6" stop-color="#80b0e0"/><stop offset="1" stop-color="#4f88c8"/></radialGradient></defs>
<rect width="128" height="72" fill="url(#g24a)"/>
<g filter="url(#bl2)"><ellipse cx="12" cy="20" rx="12" ry="4" fill="#6cbcf6"/><ellipse cx="116" cy="32" rx="12" ry="12" fill="#3c9ce8" fill-opacity=".6"/><ellipse cx="52" cy="40" rx="4" ry="4" fill="#e8f6ff" fill-opacity=".9"/><ellipse cx="3" cy="46" rx="4" ry="12" fill="#d8f0ff" fill-opacity=".8"/><ellipse cx="120" cy="62" rx="8" ry="8" fill="#7cc6fa"/><ellipse cx="64" cy="2" rx="60" ry="4" fill="#d8f0fe"/></g>
<rect x="6.800" y="24.100" width="41.100" height="46.900" fill="#fff"/>
<circle cx="26.800" cy="45.700" r="15" fill="url(#g24b)"/>
<g filter="url(#bl04)"><path d="M19.3 38.5L23.2 31.9L29.9 30.8L34.3 34.1L32.1 39.6L27.7 40.7L25.4 45.1L22.1 44.0z" fill="#d0681e"/><path d="M24.3 50.7L29.9 49.6L35.4 54.0L31.0 58.4L25.4 60.7z" fill="#d0681e"/><path d="M38.7 36.3L41.5 44.0L40.4 49.6L39.3 44.0z" fill="#c86420"/><path d="M13.200 37.400q5 14 29.400 15" fill="none" stroke="#5a9a70" stroke-width="1"/></g>
<g font-size="2" fill="#444" font-weight="bold"><text x="32" y="27.800">North Pole</text><text x="22" y="67.500">South Pole</text></g>
<rect x="57.800" y="24.100" width="53.500" height="46.900" fill="#fdcfb2"/>
<circle cx="83" cy="50.700" r="16.600" fill="#d6ecf8" stroke="#7a8a96" stroke-width=".5"/>
<path d="M78.6 41.8L87.5 39.6L96.3 42.9L95.2 51.8L89.7 54.0L85.2 58.4L80.8 58.4L78.6 49.6z" fill="#f8d2e8" filter="url(#bl04)"/>
<path d="M57.800 50.700h53.500M83 24.100v46.900" stroke="#9a8a80" stroke-width=".4" fill="none"/><path d="M74.200 71l20.400-46.900M69.700 45.200l27.700 11" stroke="#555" stroke-width=".45" fill="none"/>
<path d="M84.200 27.400q18 4 22 21.600" fill="none" stroke="#f0309a" stroke-width="1"/><path d="M104.400 47.400l1.900 3.400 1.700-3.600zM84 26l3.400 1.200-3 2z" fill="#f0309a"/>
<text x="66.1" y="14.3" text-anchor="middle" direction="rtl" font-size="3.78" fill="#141414" fill-opacity="0.82" textLength="85.8" lengthAdjust="spacingAndGlyphs" font-weight="bold">حرکت انتقالی زمین به دور خورشید باعث پیدایش فصل‌ها می‌شود</text></svg></div>
<svg class="star" width="12" height="11" style="left:54.5px;top:494px"><use href="#star" x="1.3" y="0.3" fill="#5a5a5a"/><path d="M.2 2.800h1.500M.4 5h1.300" stroke="#777" stroke-width=".8"/></svg>
<div class="th" id="slide25" style="left:1208px;top:536px"><svg width="128" height="72" viewBox="0 0 128 72" font-family="DejaVu Sans, Liberation Sans, sans-serif"><defs><radialGradient id="g25a" cx=".5" cy=".5" r=".8"><stop offset="0" stop-color="#fde4e0"/><stop offset=".6" stop-color="#fbd8d8"/><stop offset="1" stop-color="#f9c4c8"/></radialGradient>
<linearGradient id="g25b" x1="0" y1="0" x2="1" y2="0"><stop offset="0" stop-color="#1a4a6a"/><stop offset=".5" stop-color="#1a4a6a"/><stop offset=".5" stop-color="#3aa8e0"/><stop offset="1" stop-color="#3aa8e0"/></linearGradient>
<linearGradient id="g25c" x1="1" y1="0" x2="0" y2="0"><stop offset="0" stop-color="#1a4a6a"/><stop offset=".5" stop-color="#1a4a6a"/><stop offset=".5" stop-color="#3aa8e0"/><stop offset="1" stop-color="#3aa8e0"/></linearGradient></defs>
<rect width="128" height="72" fill="url(#g25a)"/>
<g filter="url(#bl2)"><circle cx="20" cy="54" r="3.500" fill="#f4b438" fill-opacity=".8"/><ellipse cx="20" cy="54" rx="14" ry="12" fill="#fef0e4" fill-opacity=".6"/><ellipse cx="112" cy="46" rx="6" ry="5" fill="#f48c8c" fill-opacity=".7"/><ellipse cx="116" cy="20" rx="10" ry="8" fill="#fde8d0" fill-opacity=".7"/><ellipse cx="30" cy="12" rx="8" ry="6" fill="#fbd0a0" fill-opacity=".5"/><ellipse cx="124" cy="68" rx="6" ry="6" fill="#f4a0a8" fill-opacity=".7"/></g>
<rect x="29.300" y="25.400" width="69.700" height="45" fill="#fff"/>
<ellipse cx="63.800" cy="46" rx="27" ry="12.500" fill="none" stroke="#f4e49a" stroke-width=".8"/>
<circle cx="63.800" cy="33.600" r="6.400" fill="#3aa8e0"/><path d="M60 31q3-3 6-1l-1 4-4 2z" fill="#2c9a40"/>
<circle cx="37.200" cy="47.200" r="6.400" fill="url(#g25b)"/><path d="M38 44q3-2 4 1l-2 4-2-1z" fill="#2c9a40"/>
<circle cx="90.600" cy="47.200" r="6.400" fill="url(#g25c)"/><path d="M86 44q3-2 4 1l-2 4-2-1z" fill="#2c9a40"/>
<circle cx="63.800" cy="57.900" r="6.400" fill="#1a4a6a"/><path d="M60 56q3-3 6-1l-1 4-4 2z" fill="#16602c"/>
<circle cx="63.800" cy="47" r="2" fill="#f4b030"/>
<g font-size="2.400" fill="#333" font-weight="bold" text-anchor="middle"><text x="37.200" y="57">Spring</text><text x="90.600" y="57">Autumn</text><text x="63.800" y="68">Winter</text><text x="68" y="43.500">Sun</text></g>
<text x="65.0" y="13.6" text-anchor="middle" direction="rtl" font-size="3.78" fill="#141414" fill-opacity="0.82" textLength="114.0" lengthAdjust="spacingAndGlyphs" font-weight="bold">مدار زمین بیضی شکل است و محور آن نسبت به سطح مدار مایل</text><text x="64.0" y="21.5" text-anchor="middle" direction="rtl" font-size="3.78" fill="#141414" fill-opacity="0.82" textLength="80.0" lengthAdjust="spacingAndGlyphs" font-weight="bold">هر نصف‌النهار نشان‌دهنده یک ساعت اختلاف زمان با گرینویچ</text></svg></div>
<svg class="star" width="12" height="11" style="left:1209.5px;top:619px"><use href="#star" x="1.3" y="0.3" fill="#5a5a5a"/><path d="M.2 2.800h1.500M.4 5h1.300" stroke="#777" stroke-width=".8"/></svg>
<div class="th" id="slide26" style="left:1043px;top:536px"><svg width="128" height="72" viewBox="0 0 128 72" font-family="DejaVu Sans, Liberation Sans, sans-serif"><defs><radialGradient id="g26a" cx=".45" cy=".45" r=".85"><stop offset="0" stop-color="#e4f8f8"/><stop offset=".4" stop-color="#a4e2ee"/><stop offset="1" stop-color="#48c2e4"/></radialGradient></defs>
<rect width="128" height="72" fill="url(#g26a)"/>
<g filter="url(#bl3)"><path d="M-4 -4h136v10q-60 8-136 0z" fill="#5cc8ea"/><path d="M-4 62q30 8 70 6v10H-4z" fill="#b0e8ee"/><ellipse cx="122" cy="38" rx="10" ry="22" fill="#52c4e6"/><ellipse cx="4" cy="30" rx="8" ry="14" fill="#58c6e8"/><ellipse cx="60" cy="6" rx="14" ry="4" fill="#f4fcfc"/></g>
<g filter="url(#bl2)"><ellipse cx="34.300" cy="46.300" rx="23" ry="11" fill="#f6f6e4"/><path d="M48 34q14-2 26 4l-2 8q-10-4-22-2z" fill="#d4d48a"/><path d="M52 38q12 2 16 12l-6 10q-2-12-12-18z" fill="#5a8a4a"/><path d="M60 36q8 2 12 8" stroke="#b8b860" stroke-width="2" fill="none"/><path d="M56 62q8-2 12 2l-2 6h-10z" fill="#c8cc90"/></g>
<rect x="73.300" y="36.800" width="39.800" height="34.200" fill="#fff"/>
<rect x="76.200" y="43.200" width="14.600" height="22.800" fill="#a6acb6"/>
<circle cx="90.800" cy="54.600" r="11.600" fill="#c8e6f8"/><path d="M90.800 43a11.600 11.600 0 0 0 0 23.200z" fill="#8898a8"/>
<g filter="url(#bl04)"><path d="M92 46.500q6-1 9 4l-2 6-4 7-3-4 1-6z" fill="#f8f060"/><path d="M81 50q3-2 5 0l-1 8-3 2-2-5z" fill="#b8a248"/></g>
<circle cx="90.800" cy="54.600" r="11.600" fill="none" stroke="#7a8690" stroke-width=".4"/>
<path d="M90.800 41.500v27M86.500 68l9.500-27" stroke="#444" stroke-width=".4"/>
<path d="M113.100 39.600q-7.200 5-7.200 15.500 0 10.500 7.200 15.500z" fill="#ffc840"/>
<g font-size="1.800" fill="#555" font-weight="bold"><text x="102.500" y="46.500">60</text><text x="102.500" y="51">30</text><text x="102.500" y="55.500">0</text><text x="102.500" y="60">30</text><text x="102.500" y="64.500">60</text></g>
<rect x="25.700" y="33.900" width="2.500" height="8.100" fill="#2838d8" fill-opacity=".9"/>
<text x="65.3" y="13.0" text-anchor="middle" direction="rtl" font-size="3.78" fill="#141414" fill-opacity="0.82" textLength="115.2" lengthAdjust="spacingAndGlyphs" font-weight="bold">ساعت رسمی کشورها بر اساس نصف‌النهار مبدأ تعیین می‌شود</text><text x="65.0" y="21.5" text-anchor="middle" direction="rtl" font-size="3.78" fill="#141414" fill-opacity="0.82" textLength="82.5" lengthAdjust="spacingAndGlyphs" font-weight="bold">در اول بهار و پاییز طول روز و شب</text><text x="16.2" y="32.4" text-anchor="middle" direction="rtl" font-size="3.78" fill="#141414" fill-opacity="0.82" textLength="10.5" lengthAdjust="spacingAndGlyphs" font-weight="bold">می‌شود</text><text x="27.5" y="32.4" text-anchor="middle" direction="rtl" font-size="3.78" fill="#d81818" fill-opacity="0.9" textLength="11.0" lengthAdjust="spacingAndGlyphs" font-weight="bold">عمود</text><text x="46.2" y="32.4" text-anchor="middle" direction="rtl" font-size="3.78" fill="#d81818" fill-opacity="0.9" textLength="23.5" lengthAdjust="spacingAndGlyphs" font-weight="bold">مدار رأس‌السرطان</text><text x="80.0" y="32.4" text-anchor="middle" direction="rtl" font-size="3.78" fill="#141414" fill-opacity="0.82" textLength="41.0" lengthAdjust="spacingAndGlyphs" font-weight="bold">خورشید در تابستان بر مدار</text><text x="109.0" y="32.4" text-anchor="middle" direction="rtl" font-size="3.78" fill="#d81818" fill-opacity="0.9" textLength="14.4" lengthAdjust="spacingAndGlyphs" font-weight="bold">اول تابستان</text><text x="119.2" y="32.4" text-anchor="middle" direction="rtl" font-size="3.78" fill="#141414" fill-opacity="0.82" textLength="4.0" lengthAdjust="spacingAndGlyphs" font-weight="bold">در</text><text x="31.8" y="49.8" text-anchor="middle" direction="rtl" font-size="3.78" fill="#141414" fill-opacity="0.82" textLength="49.2" lengthAdjust="spacingAndGlyphs" font-weight="bold">زمین در هر ۲۴ ساعت</text><text x="17.6" y="56.8" text-anchor="middle" direction="rtl" font-size="3.78" fill="#d81818" fill-opacity="0.9" textLength="23.3" lengthAdjust="spacingAndGlyphs" font-weight="bold">انقلاب تابستانی</text><text x="34.3" y="65.2" text-anchor="middle" direction="rtl" font-size="3.78" fill="#141414" fill-opacity="0.82" textLength="53.2" lengthAdjust="spacingAndGlyphs" font-weight="bold">حرکت وضعی زمین از غرب به</text></svg></div>
<svg class="star" width="12" height="11" style="left:1044.5px;top:619px"><use href="#star" x="1.3" y="0.3" fill="#5a5a5a"/><path d="M.2 2.800h1.500M.4 5h1.300" stroke="#777" stroke-width=".8"/></svg>
<div class="th" id="slide27" style="left:878px;top:536px"><svg width="128" height="72" viewBox="0 0 128 72" font-family="DejaVu Sans, Liberation Sans, sans-serif"><defs><linearGradient id="g27a" x1="0" y1="1" x2="1" y2="0"><stop offset="0" stop-color="#ecdfe2"/><stop offset=".5" stop-color="#e8dade"/><stop offset=".85" stop-color="#dcc4c4"/><stop offset="1" stop-color="#b88470"/></linearGradient></defs>
<rect width="128" height="72" fill="url(#g27a)"/>
<g filter="url(#bl3)"><ellipse cx="20" cy="10" rx="20" ry="6" fill="#f4ecee"/><ellipse cx="70" cy="30" rx="30" ry="6" fill="#dccace" fill-opacity=".9"/><ellipse cx="30" cy="44" rx="24" ry="7" fill="#f2eaec"/><ellipse cx="50" cy="62" rx="30" ry="6" fill="#dcccd2" fill-opacity=".9"/><ellipse cx="110" cy="26" rx="16" ry="6" fill="#f0e6e8"/><ellipse cx="8" cy="28" rx="10" ry="6" fill="#d8c8cc"/><ellipse cx="120" cy="4" rx="10" ry="5" fill="#a87460"/></g>
<rect x="74.700" y="38" width="39.700" height="32.800" fill="#fff"/>
<rect x="98.500" y="43" width="14.500" height="23" fill="#a8aeb6"/>
<circle cx="98.500" cy="54.500" r="11.500" fill="#bfe0f6"/><path d="M98.500 43a11.500 11.500 0 0 1 0 23z" fill="#8e9aa6"/>
<g filter="url(#bl04)"><path d="M90 48q5-2 8 1l-1 8-4 4-4-5z" fill="#f4e45a"/><path d="M100 47q6 0 8 5l-3 8-5 2z" fill="#b8a048"/></g>
<path d="M98.500 41v27M94 68l10-28" stroke="#444" stroke-width=".4"/>
<path d="M74.700 42q8 4 8 12.500 0 8.500-8 12.500z" fill="#f6b83c"/>
<rect x="26" y="34" width="2.200" height="8" fill="#2838d8"/>
<text x="65.0" y="13.1" text-anchor="middle" direction="rtl" font-size="3.78" fill="#141414" fill-opacity="0.82" textLength="122.0" lengthAdjust="spacingAndGlyphs" font-weight="bold">حرکت انتقالی زمین به دور خورشید باعث پیدایش فصل‌ها می‌شود</text><text x="65.0" y="21.0" text-anchor="middle" direction="rtl" font-size="3.78" fill="#141414" fill-opacity="0.82" textLength="66.0" lengthAdjust="spacingAndGlyphs" font-weight="bold">مدار زمین بیضی شکل است و محور</text><text x="94.0" y="32.5" text-anchor="middle" direction="rtl" font-size="3.78" fill="#141414" fill-opacity="0.82" textLength="56.0" lengthAdjust="spacingAndGlyphs" font-weight="bold">هر نصف‌النهار نشان‌دهنده یک ساعت اختلاف</text><text x="21.0" y="32.5" text-anchor="middle" direction="rtl" font-size="3.78" fill="#141414" fill-opacity="0.82" textLength="18.0" lengthAdjust="spacingAndGlyphs" font-weight="bold">می‌تابد</text><text x="48.0" y="32.5" text-anchor="middle" direction="rtl" font-size="3.78" fill="#d81818" fill-opacity="0.9" textLength="34.0" lengthAdjust="spacingAndGlyphs" font-weight="bold">رأس‌الجدی عمود</text><text x="22.5" y="49.0" text-anchor="middle" direction="rtl" font-size="3.78" fill="#141414" fill-opacity="0.82" textLength="29.0" lengthAdjust="spacingAndGlyphs" font-weight="bold">ساعت رسمی کشورها</text><text x="18.5" y="57.0" text-anchor="middle" direction="rtl" font-size="3.78" fill="#d81818" fill-opacity="0.9" textLength="23.0" lengthAdjust="spacingAndGlyphs" font-weight="bold">انقلاب زمستانی</text><text x="35.5" y="65.1" text-anchor="middle" direction="rtl" font-size="3.78" fill="#141414" fill-opacity="0.82" textLength="53.0" lengthAdjust="spacingAndGlyphs" font-weight="bold">در اول بهار و پاییز طول</text></svg></div>
<svg class="star" width="12" height="11" style="left:879.5px;top:619px"><use href="#star" x="1.3" y="0.3" fill="#5a5a5a"/><path d="M.2 2.800h1.500M.4 5h1.300" stroke="#777" stroke-width=".8"/></svg>
<div class="th" id="slide28" style="left:713px;top:536px"><svg width="128" height="72" viewBox="0 0 128 72" font-family="DejaVu Sans, Liberation Sans, sans-serif"><defs><radialGradient id="g28a" cx=".55" cy=".45" r=".8"><stop offset="0" stop-color="#fff060"/><stop offset=".35" stop-color="#ffe020"/><stop offset=".7" stop-color="#fbc408"/><stop offset="1" stop-color="#f59a00"/></radialGradient></defs>
<rect width="128" height="72" fill="url(#g28a)"/>
<g filter="url(#bl3)"><path d="M-4 -4h50q-30 10-50 40z" fill="#f49a00" fill-opacity=".85"/><path d="M-4 60q40 14 136-2v18H-4z" fill="#f6a400" fill-opacity=".9"/><path d="M-4 40q30 20 80 14l-10 8q-40 4-70-10z" fill="#fff48c" fill-opacity=".6"/><circle cx="30" cy="20" r="9" fill="#fff8b0" fill-opacity=".7"/><circle cx="86" cy="56" r="7" fill="#fffac0" fill-opacity=".8"/><path d="M132 10v30q-10-10-30-20z" fill="#f8b400" fill-opacity=".6"/></g>
<g fill="#fffde0" fill-opacity=".9"><circle cx="12" cy="30" r=".8"/><circle cx="24" cy="34" r=".7"/><circle cx="6" cy="48" r=".7"/><circle cx="20" cy="44" r=".6"/><circle cx="110" cy="24" r=".8"/><circle cx="122" cy="30" r=".7"/><circle cx="100" cy="44" r=".6"/><circle cx="118" cy="52" r=".8"/><circle cx="40" cy="60" r=".6"/><circle cx="8" cy="64" r=".7"/><circle cx="124" cy="14" r=".6"/></g>
<g fill="#c0604a" fill-opacity=".7"><path d="M63.200 18h1.800v2.600h1l-1.900 2.400-1.900-2.400h1zM63.200 32.500h1.800v2.600h1l-1.900 2.400-1.900-2.400h1zM63.200 46.500h1.800v2.600h1l-1.900 2.400-1.900-2.400h1zM63.200 60.500h1.800v2.600h1l-1.900 2.400-1.900-2.400h1z"/></g>
<text x="65.5" y="8.2" text-anchor="middle" direction="rtl" font-size="3.78" fill="#141414" fill-opacity="0.9" textLength="117.0" lengthAdjust="spacingAndGlyphs" font-weight="bold">خورشید در تابستان بر مدار رأس‌السرطان عمود می‌تابد</text><text x="65.0" y="14.1" text-anchor="middle" direction="rtl" font-size="3.78" fill="#141414" fill-opacity="0.9" textLength="110.0" lengthAdjust="spacingAndGlyphs" font-weight="bold">زمین در هر ۲۴ ساعت یک بار به دور خود می‌چرخد و</text><text x="66.0" y="28.5" text-anchor="middle" direction="rtl" font-size="3.78" fill="#141414" fill-opacity="0.9" textLength="80.0" lengthAdjust="spacingAndGlyphs" font-weight="bold">حرکت وضعی زمین از غرب به شرق است و</text><text x="65.0" y="43.0" text-anchor="middle" direction="rtl" font-size="3.78" fill="#141414" fill-opacity="0.9" textLength="122.0" lengthAdjust="spacingAndGlyphs" font-weight="bold">حرکت انتقالی زمین به دور خورشید باعث پیدایش فصل‌ها می‌شود</text><text x="66.0" y="57.0" text-anchor="middle" direction="rtl" font-size="3.78" fill="#141414" fill-opacity="0.7" textLength="104.0" lengthAdjust="spacingAndGlyphs" font-weight="bold">مدار زمین بیضی شکل است و محور آن نسبت به سطح مدار</text><text x="65.0" y="70.1" text-anchor="middle" direction="rtl" font-size="3.78" fill="#141414" fill-opacity="0.9" textLength="86.0" lengthAdjust="spacingAndGlyphs" font-weight="bold">هر نصف‌النهار نشان‌دهنده یک ساعت اختلاف زمان با گرینویچ است</text></svg></div>
<svg class="star" width="12" height="11" style="left:714.5px;top:619px"><use href="#star" x="1.3" y="0.3" fill="#5a5a5a"/><path d="M.2 2.800h1.500M.4 5h1.300" stroke="#777" stroke-width=".8"/></svg>
<div class="th" id="slide29" style="left:548px;top:536px"><svg width="128" height="72" viewBox="0 0 128 72" font-family="DejaVu Sans, Liberation Sans, sans-serif"><defs><linearGradient id="g29a" x1="0" y1="0" x2="0" y2="1"><stop offset="0" stop-color="#a8ece8"/><stop offset=".3" stop-color="#d8f6ec"/><stop offset=".5" stop-color="#c8f0c8"/><stop offset="1" stop-color="#b0ecea"/></linearGradient></defs>
<rect width="128" height="72" fill="url(#g29a)"/>
<g filter="url(#bl3)"><ellipse cx="20" cy="14" rx="14" ry="6" fill="#f4fcf8" fill-opacity=".9"/><ellipse cx="90" cy="6" rx="30" ry="5" fill="#c0f0f0"/><ellipse cx="70" cy="24" rx="40" ry="4" fill="#d4f4c8" fill-opacity=".8"/><ellipse cx="110" cy="18" rx="14" ry="5" fill="#f0fcf8" fill-opacity=".9"/><ellipse cx="2" cy="50" rx="4" ry="14" fill="#d8f8f0"/><ellipse cx="126" cy="50" rx="4" ry="14" fill="#98e8e4"/></g>
<rect x="6.900" y="29" width="115.100" height="43" fill="#fff"/>
<rect x="14.600" y="34" width="17.300" height="32.400" fill="#a2a2aa"/><rect x="96.300" y="34" width="16.700" height="32.400" fill="#a2a2aa"/>
<circle cx="31.900" cy="50.200" r="16.300" fill="#c4e2f8"/><path d="M31.900 33.900a16.300 16.300 0 0 0 0 32.600z" fill="#8290a2"/>
<circle cx="96.300" cy="50.200" r="16.300" fill="#c4e2f8"/><path d="M96.300 33.900a16.300 16.300 0 0 1 0 32.600z" fill="#8290a2"/>
<g filter="url(#bl04)"><path d="M34 38q8-3 12 2l2 8-2 6-6 2-4 8-4-6 2-10z" fill="#f8e868"/><path d="M17 43q5-3 8 1l-2 8-4 4-3-6z" fill="#9c9448"/><path d="M82 43q5-3 8 1l-1 8-4 4-4-6z" fill="#f8e868"/><path d="M98 38q8-3 12 2l2 8-2 6-6 2-4 8-3-6 1-10z" fill="#a09a4c"/></g>
<circle cx="31.900" cy="50.200" r="16.300" fill="none" stroke="#7a7a82" stroke-width=".5"/><circle cx="96.300" cy="50.200" r="16.300" fill="none" stroke="#7a7a82" stroke-width=".5"/>
<path d="M31.900 33v35M24 69l16-38M96.300 33v35M88 69l16-38" stroke="#444" stroke-width=".4"/>
<path d="M63.700 28.600q9.500 10 9.500 21.600 0 11.600-9.500 21.800-9.500-10.200-9.500-21.800 0-11.600 9.500-21.600z" fill="#ffb02e"/><path d="M63.700 29v43" stroke="#ffe2a0" stroke-width=".8"/>
<rect x="16" y="30.200" width="8.200" height="3" fill="#f060a0"/><rect x="107" y="30.400" width="8.200" height="3" fill="#f060a0"/>
<g font-size="2.200" fill="#444" font-weight="bold"><text x="51" y="38">90°</text><text x="51" y="44.500">60°</text><text x="51" y="51">30°</text><text x="51" y="57.500">0°</text><text x="51" y="64.500">30°</text><text x="74" y="38">90°</text><text x="74" y="44.500">60°</text><text x="74" y="51">30°</text><text x="74" y="57.500">0°</text><text x="74" y="64.500">30°</text></g>
<text x="64.5" y="10.1" text-anchor="middle" direction="rtl" font-size="3.96" fill="#141414" fill-opacity="0.9" textLength="111.1" lengthAdjust="spacingAndGlyphs" font-weight="bold">ساعت رسمی کشورها بر اساس نصف‌النهار مبدأ تعیین می‌شود</text><text x="65.0" y="15.8" text-anchor="middle" direction="rtl" font-size="3.96" fill="#141414" fill-opacity="0.9" textLength="54.0" lengthAdjust="spacingAndGlyphs" font-weight="bold">در اول بهار و پاییز طول</text><text x="64.5" y="25.5" text-anchor="middle" direction="rtl" font-size="3.96" fill="#141414" fill-opacity="0.9" textLength="65.0" lengthAdjust="spacingAndGlyphs" font-weight="bold">خورشید در تابستان بر مدار رأس‌السرطان عمود</text></svg></div>
<svg class="star" width="12" height="11" style="left:549.5px;top:619px"><use href="#star" x="1.3" y="0.3" fill="#5a5a5a"/><path d="M.2 2.800h1.500M.4 5h1.300" stroke="#777" stroke-width=".8"/></svg>
<svg id="chrome-bottom" width="1366" height="62" viewBox="0 706 1366 62" style="top:706px;will-change:transform" font-family="Liberation Sans, sans-serif">
<defs>
<linearGradient id="tbg" x1="0" y1="0" x2="1" y2="0"><stop offset="0" stop-color="#3e425a"/><stop offset=".1" stop-color="#464b60"/><stop offset=".2" stop-color="#42475c"/><stop offset=".3" stop-color="#4a4f63"/><stop offset=".42" stop-color="#3e445a"/><stop offset=".46" stop-color="#30407a"/><stop offset=".56" stop-color="#364e8a"/><stop offset=".7" stop-color="#3c5692"/><stop offset=".8" stop-color="#3d4e88"/><stop offset=".86" stop-color="#474a7e"/><stop offset="1" stop-color="#45497c"/></linearGradient>
<linearGradient id="tg" x1="0" y1="0" x2="0" y2="1"><stop offset="0" stop-color="#3ab0e6"/><stop offset="1" stop-color="#1c90c6"/></linearGradient>
<radialGradient id="ieg" cx=".4" cy=".35" r=".8"><stop offset="0" stop-color="#8fe0fa"/><stop offset=".5" stop-color="#2ab0ee"/><stop offset="1" stop-color="#1686d8"/></radialGradient>
<radialGradient id="ffg" cx=".6" cy=".25" r=".9"><stop offset="0" stop-color="#fff36a"/><stop offset=".35" stop-color="#ffb21e"/><stop offset=".7" stop-color="#ff5a24"/><stop offset="1" stop-color="#e8187c"/></radialGradient>
<radialGradient id="ffp" cx=".5" cy=".4" r=".7"><stop offset="0" stop-color="#a24af0"/><stop offset="1" stop-color="#4a2ab0"/></radialGradient>
<radialGradient id="idg" cx=".4" cy=".35" r=".7"><stop offset="0" stop-color="#e8f0b0"/><stop offset=".4" stop-color="#7ab0d0"/><stop offset="1" stop-color="#1c4a9c"/></radialGradient>
<linearGradient id="fold" x1="0" y1="0" x2="0" y2="1"><stop offset="0" stop-color="#fbeaa4"/><stop offset="1" stop-color="#f0cc62"/></linearGradient>
<linearGradient id="scr" x1="0" y1="0" x2="1" y2="1"><stop offset="0" stop-color="#0a1eb0"/><stop offset=".5" stop-color="#1c48e0"/><stop offset="1" stop-color="#0a28c0"/></linearGradient>
<filter id="tex1" x="0" y="0" width="100%" height="100%"><feTurbulence type="fractalNoise" baseFrequency="0.035 0.09" numOctaves="3" seed="7" result="n"/><feColorMatrix in="n" type="matrix" values="0 0 0 0 0.8  0 0 0 0 0.82  0 0 0 0 0.88  1.6 1.2 0 0 -1.15"/></filter>
<filter id="tex2" x="0" y="0" width="100%" height="100%"><feTurbulence type="fractalNoise" baseFrequency="0.05 0.22" numOctaves="3" seed="11" result="n"/><feColorMatrix in="n" type="matrix" values="0 0 0 0 0.55  0 0 0 0 0.66  0 0 0 0 0.92  1.5 1.3 0 0 -1.1"/></filter>
</defs>
<!-- ===== status bar icons ===== -->
<g id="sb-spell" fill="none" stroke="#fff" stroke-width="1">
<path d="M103.500 711.500h-6v10h6M103.500 711.500v10l-1.500 1.600M103.500 711.500h6.500v3M110 718.500v3h-6.500"/>
<path d="M105.500 715.500l2 2 3.500-4" stroke-width="1.200"/>
</g>
<rect x="1049" y="706" width="38" height="22" fill="#b83b1d"/>
<g id="sb-views" fill="#fbe9e4">
<path d="M1023 710h14v13h-14zM1027 711.200v10.600h8.800v-10.600z" fill-rule="evenodd"/><path d="M1023 710h4v13h-4z"/><rect x="1028.500" y="712.500" width="6" height="3.500" fill="none" stroke="#fbe9e4" stroke-width="1"/><path d="M1027 717.800h9v1.200h-9z"/>
<path d="M1061 710h6v5.500h-6zM1069 710h6v5.500h-6zM1061 717.500h6v5.500h-6zM1069 717.500h6v5.500h-6z"/>
</g>
<g id="sb-read" fill="none" stroke="#fbe9e4" stroke-width="1">
<path d="M1105.500 711.500q-3-1.600-6 0v9.500q3-1.600 6 0zM1105.500 711.500q3-1.600 6 0v9.500q-3-1.600-6 0zM1105.500 721v2.500"/>
<path d="M1100.800 713.500h3.400M1100.800 715.500h3.400M1100.800 717.500h3.400M1100.800 719.500h3.400M1107 713.500h3.400M1107 715.500h3.400M1107 717.500h3.400M1107 719.500h3.400" stroke-width=".8"/>
</g>
<g id="sb-show" fill="none" stroke="#fbe9e4" stroke-width="1">
<path d="M1137 711h13" stroke-width="1.600"/><path d="M1138.500 711.500v6.500h10v-6.500M1143.500 718v4.500M1141 723h5.400M1141 714.500h5.400"/>
</g>
<g id="sb-zoom" fill="#fff">
<rect x="1168" y="716" width="6" height="2"/>
<rect x="1178" y="716" width="100" height="1"/>
<rect x="1190" y="710.500" width="4" height="12.500"/>
<rect x="1228" y="714" width="1" height="5"/>
<rect x="1282" y="716" width="8.400" height="2"/><rect x="1285.200" y="712.800" width="2" height="8.400"/>
</g>
<g id="sb-fit" fill="none" stroke="#fbe9e4">
<rect x="1346.500" y="710.500" width="13" height="13" stroke-width="1"/>
<path d="M1353 711.500v3.600M1353 722.500v-3.600M1347.500 717h3.600M1358.500 717h-3.600" stroke-width="1.400"/><path d="M1351.200 713.800l1.800-1.800 1.800 1.800M1351.200 720.200l1.800 1.800 1.800-1.800M1349.800 715.200l-1.800 1.800 1.800 1.800M1356.200 715.200l1.800 1.800-1.800 1.800" stroke-width="1.100"/>
</g>
<!-- ===== taskbar ===== -->
<rect x="0" y="728" width="1366" height="40" fill="url(#tbg)"/>
<g filter="url(#bl3)" fill-opacity=".5">
<ellipse cx="20" cy="734" rx="30" ry="5" fill="#5a5e78"/><ellipse cx="110" cy="748" rx="18" ry="10" fill="#565a70"/><ellipse cx="180" cy="735" rx="26" ry="5" fill="#5c6076"/><ellipse cx="236" cy="760" rx="20" ry="8" fill="#2c2e48"/><ellipse cx="330" cy="740" rx="28" ry="10" fill="#5e5e70"/><ellipse cx="430" cy="750" rx="26" ry="12" fill="#585a70"/><ellipse cx="520" cy="742" rx="30" ry="10" fill="#5a5c70"/><ellipse cx="585" cy="760" rx="20" ry="8" fill="#34364e"/>
<ellipse cx="640" cy="752" rx="26" ry="12" fill="#4a5270"/><ellipse cx="700" cy="738" rx="30" ry="6" fill="#44588a"/><ellipse cx="820" cy="752" rx="60" ry="8" fill="#3c5a98"/><ellipse cx="960" cy="740" rx="60" ry="8" fill="#425c96"/><ellipse cx="1075" cy="756" rx="30" ry="12" fill="#2e3868"/><ellipse cx="1160" cy="738" rx="40" ry="8" fill="#50548a"/><ellipse cx="1290" cy="736" rx="50" ry="6" fill="#55588c"/><ellipse cx="1340" cy="760" rx="30" ry="8" fill="#3a3e6c"/>
</g>
<rect x="0" y="728" width="640" height="40" fill="#c8ccd8" filter="url(#tex1)" opacity=".4"/><rect x="600" y="728" width="766" height="40" fill="#9ab0e8" filter="url(#tex2)" opacity=".13"/>

<g id="tb-buttons" fill="#fff" fill-opacity=".17" stroke="#fff" stroke-opacity=".42" stroke-width="1">
<rect x="238.500" y="729.500" width="57" height="37"/>
<rect x="362.500" y="729.500" width="57" height="37"/>
<rect x="424.500" y="729.500" width="52" height="37"/><path d="M477 729.500h4.500v37H477" fill-opacity=".1"/>
<rect x="486.500" y="729.500" width="57" height="37"/>
<rect x="548.500" y="729.500" width="57" height="37" fill-opacity=".36" stroke-opacity=".9"/>
</g>
<g id="tb-win" fill="#fff"><path d="M11.700 738.400l11.200-1.600v10.200H11.700zM24.200 736.600l14.200-2v12.400H24.200zM11.700 748.200h11.200v10.200l-11.200-1.600zM24.200 748.200h14.200v12l-14.200-2z"/></g>
<g id="tb-telegram"><circle cx="81" cy="747.500" r="14.300" fill="url(#tg)"/><path d="M72 747.200l16.500-6.400q1.200-.3 1 1l-2.800 13.200q-.3 1.200-1.400.6l-4.300-3.200-2.100 2q-.5.500-.6-.3l.4-3.300 7.400-6.700q.3-.5-.4-.2l-9.200 5.800-4.200-1.300q-1-.5-.3-1.200z" fill="#fff"/><path d="M78.700 750.800l7.400-6.700-6 7.600-.9 3.500z" fill="#c8daea"/></g>
<g id="tb-ie"><path d="M132 759.500q3 2.600 9-1" fill="none" stroke="#e8a010" stroke-width="2.200"/>
<path d="M152.600 755.200A10 10 0 1 1 154.600 747.800H137.500" fill="none" stroke="#27a6ec" stroke-width="6.200"/><path d="M152 753.800A9 9 0 1 1 153.200 745.800" fill="none" stroke="#86dcfb" stroke-width="1.800" stroke-opacity=".75"/>
<path d="M131.600 760q-3.600-4 2.400-14 8-12 18-13 6.400-.2 5 6" fill="none" stroke="#f6c11c" stroke-width="2.500"/></g>
<g id="tb-idm"><g fill="none" stroke-width="2.300"><path d="M197.500 739.600q-9.500 6-7.500 13.600" stroke="#e8382a"/><path d="M198.600 741.800q-8 5.400-6.600 11.800" stroke="#f8d424"/><path d="M199.800 744q-6.600 4.600-5.600 10" stroke="#36b04a"/><path d="M190 753q3 6.800 14 7.200" stroke="#e8382a" stroke-opacity="0"/></g>
<path d="M189.800 751.600q1.600 7 13.200 8.400l.6-2.300q-9.400-1.200-11.400-6.600z" fill="#f8d424"/><path d="M189.200 753.800q2.400 7.600 14.200 8.400l.2-2.300q-10-1-12.200-6.800z" fill="#36b04a"/><path d="M189.400 756.400q3.400 6.200 14.200 6.600v-2.200q-9.600-.4-12.400-5.400z" fill="#3c74dc"/>
<circle cx="209.200" cy="741.800" r="10.300" fill="url(#idg)"/><path d="M201.500 741q3-7.500 10-7l2.500 3-5 2.500-3 5.500-3.500 1z" fill="#aac234" fill-opacity=".95"/><path d="M205 736.500l3-1.500 2 1.500-3 1.500z" fill="#f4f4d8" fill-opacity=".9"/><path d="M200 746.500q8 7 19 0" fill="none" stroke="#1a2a4c" stroke-width="1.400" stroke-opacity=".6"/>
<path d="M202.200 746.800l18.200 4.400-15.300 10.500z" fill="#16ac1c"/><path d="M202.200 746.800l5.800 6.700-2.900 8.200z" fill="#0b6e12"/></g>
<g id="tb-osk"><path d="M256 732.400l25.200 3v19.900l-25.200-.8z" fill="#e6e6ea"/><path d="M257.600 734.200l22 2.700v16.800l-22-.7z" fill="url(#scr)"/><path d="M268 735.500l11.600 1.400v10l-9 6.600z" fill="#a8c4f8" fill-opacity=".6"/>
<path d="M264 754.800h9l1.500 3h-12z" fill="#c4c4c8"/><ellipse cx="268.400" cy="758.900" rx="8.600" ry="3.400" fill="#e2e2e6"/>
<rect x="251" y="738.300" width="22.600" height="9.700" rx="1.300" fill="#e4e8ee" stroke="#c8ccd4" stroke-width=".6"/><rect x="252.200" y="739.500" width="20.200" height="7.300" fill="#2f8ae4"/><path d="M253.200 741h18.200M253.200 743.200h18.200M253.200 745.400h18.200" stroke="#e8f4fe" stroke-width="1" stroke-dasharray="1.600 .7"/></g>
<g id="tb-chrome"><circle cx="329.2" cy="748.0" r="7.7" fill="#fff"/><path d="M316.21 740.50A15.0 15.0 0 0 1 342.19 740.50L329.20 740.60A7.4 7.4 0 0 0 322.79 751.70z" fill="#de4a3c"/><path d="M342.19 740.50A15.0 15.0 0 0 1 329.20 763.00L335.61 751.70A7.4 7.4 0 0 0 329.20 740.60z" fill="#fecd42"/><path d="M329.20 763.00A15.0 15.0 0 0 1 316.21 740.50L322.79 751.70A7.4 7.4 0 0 0 335.61 751.70z" fill="#1da362"/><circle cx="329.2" cy="748.0" r="6.900" fill="#fff"/><circle cx="329.2" cy="748.0" r="5.500" fill="#4a8af4"/></g>
<g id="tb-firefox"><circle cx="391" cy="749" r="14" fill="url(#ffg)"/><path d="M393 733q7 4 8 12l4-4q3 10-2 16l-8-14z" fill="#ffd23a"/><path d="M378 742q1-5 4-7l1 4q3-1 6 1l-5 4z" fill="#ff8a1e"/><circle cx="391.500" cy="749.500" r="7.600" fill="url(#ffp)"/><path d="M380 746q6-2 10 1 3 0 4-2 2 4-2 7-6 3-10-1z" fill="#ffa21e"/><path d="M384 742.500q5-1.500 9 1l-3 2q-3-1-6-.5z" fill="#ff7a20"/></g>
<g id="tb-explorer"><path d="M434.500 739.500q0-1.500 1.500-1.500h8.500l2 2.500h16.500q1.500 0 1.500 1.500v17q0 1.500-1.500 1.500h-27q-1.500 0-1.500-1.500z" fill="#f2d680"/><path d="M436 736.500h12l2 2.200h-14z" fill="#f6e4a0"/>
<path d="M435 743.500h30.500v15.500q0 1.500-1.500 1.500h-27.500q-1.500 0-1.500-1.500z" fill="url(#fold)"/>
<rect x="438" y="735.600" width="3.600" height="2.200" fill="#18b028"/><rect x="445.800" y="737.400" width="3.600" height="2.200" fill="#e02818"/><rect x="454" y="739.200" width="3.600" height="2.200" fill="#1c8ae8"/><rect x="449.400" y="737.400" width="8" height="2" fill="#fff"/><rect x="457.600" y="739.200" width="6" height="2" fill="#fff"/>
<path d="M438.500 763.500v-11q0-1.500 1.500-1.500h20q1.500 0 1.500 1.500v11h-4.500v-7h-14v7z" fill="#7cd0f4" stroke="#2c9ad0" stroke-width=".6"/><path d="M440 752.500h20" stroke="#e4f6fe" stroke-width="1.200"/></g>
<g id="tb-wmp"><rect x="504.500" y="738.200" width="22.500" height="23" fill="#4a9ccc"/><rect x="502.800" y="737.800" width="22.500" height="23" fill="#7cc4ea"/><rect x="501" y="737.400" width="22.500" height="23" fill="#a8dcf6" stroke="#6ab4e0" stroke-width=".5"/>
<circle cx="511.500" cy="749" r="9" fill="#f47a10"/><circle cx="511.500" cy="749" r="7.600" fill="#f89420"/><path d="M508.500 744l8 5-8 5z" fill="#fff"/></g>
<g id="tb-ppt"><path d="M578 737.200h12.600q1.200 0 1.200 1.200v20.200q0 1.200-1.200 1.200H578z" fill="#fff" stroke="#d24726" stroke-width="1"/>
<path d="M562 736l18-3v30l-18-3z" fill="#d24726"/>
<path d="M584.800 740.500a4.200 4.200 0 1 0 4.200 4.200h-4.200z" fill="#d24726"/><path d="M585.800 739.500a4.200 4.200 0 0 1 4.200 4.200h-4.200z" fill="#d24726"/>
<path d="M580.500 752.500h9M580.500 755.500h9" stroke="#d24726" stroke-width="1.500"/>
<text x="565.800" y="755" font-size="17.500" font-weight="bold" fill="#fff" textLength="11" lengthAdjust="spacingAndGlyphs">P</text></g>
<!-- tray -->
<g id="tray" fill="#fff">
<path d="M1126.600 751.300l3.900-4.300 3.900 4.300z"/>
<path d="M1147.800 741.700h1.500v14.600h-1.500z"/><path d="M1149.300 742.500q3-1.400 5.600 0 2.600 1.400 5.600 0v7q-3 1.400-5.600 0-2.600-1.400-5.600 0z"/>
<circle cx="1158" cy="752.200" r="4.300" fill="#e02020" stroke="#fff" stroke-width=".6"/><path d="M1156.200 750.400l3.600 3.600M1159.800 750.400l-3.600 3.600" stroke="#fff" stroke-width="1.300"/>
<path d="M1173.400 742.200h1.300v3.200h-1.300zM1176.300 742.200h1.300v3.200h-1.300zM1172.400 745.400h6.200v3.400l-2.200 1.400v6h-1.800v-6l-2.200-1.400z"/>
<path d="M1181.500 742.200h3v1.200h-3z"/><rect x="1179.800" y="743.600" width="6.400" height="12.200" fill="none" stroke="#fff" stroke-width="1.300"/><rect x="1181.400" y="745.200" width="3.200" height="9" />
<path d="M1195.700 752.600h2v2h-2zM1198.700 750.600h2v4h-2zM1201.700 748.400h2v6.200h-2zM1204.700 746h2v8.600h-2zM1207.700 743.600h2.400v11h-2.400z"/>
<path d="M1221.400 746.400h2.600l4-4v13.400l-4-4h-2.600z"/><path d="M1230.200 745.200q2.800 3.700 0 7.400M1232.200 743.600q4 5.300 0 10.600" fill="none" stroke="#fff" stroke-width=".9" stroke-opacity=".8"/>
</g>
</svg>

<div id="labels">
<span class="t" style="left:631.33px;top:6.00px;font-size:13px;transform:scaleX(0.9306);">2.ppt - PowerPoint</span>
<span class="t" style="left:1230.38px;top:4.80px;font-size:13px;transform:scaleX(1.0281);color:#666;font-weight:bold;">?</span>
<span class="t" style="left:18.99px;top:31.75px;font-size:12.5px;transform:scaleX(0.8085);color:#fff;">FILE</span>
<span class="t" style="left:75.86px;top:31.75px;font-size:12.5px;transform:scaleX(0.9426);color:#d24726;">HOME</span>
<span class="t" style="left:138.92px;top:31.75px;font-size:12.5px;transform:scaleX(0.8557);">INSERT</span>
<span class="t" style="left:206.74px;top:31.75px;font-size:12.5px;transform:scaleX(0.8553);">DESIGN</span>
<span class="t" style="left:276.08px;top:31.75px;font-size:12.5px;transform:scaleX(0.8853);">TRANSITIONS</span>
<span class="t" style="left:378.80px;top:31.75px;font-size:12.5px;transform:scaleX(0.9618);">ANIMATIONS</span>
<span class="t" style="left:480.73px;top:31.75px;font-size:12.5px;transform:scaleX(0.8558);">SLIDE SHOW</span>
<span class="t" style="left:576.69px;top:31.75px;font-size:12.5px;transform:scaleX(0.8135);">REVIEW</span>
<span class="t" style="left:646.16px;top:31.75px;font-size:12.5px;transform:scaleX(0.8339);">VIEW</span>
<span class="t" style="left:701.82px;top:31.75px;font-size:12.5px;transform:scaleX(0.8774);">NITRO PRO 10</span>
<span class="t" style="left:1329.56px;top:28.75px;font-size:12.5px;transform:scaleX(0.9737);">Sign in</span>
<span class="t" style="left:10.90px;top:93.00px;font-size:12px;transform:scaleX(0.9448);color:#a3a3a3;">Paste</span>
<span class="t" style="left:68.09px;top:59.00px;font-size:12px;transform:scaleX(1.0172);">Cut</span>
<span class="t" style="left:68.10px;top:82.00px;font-size:12px;transform:scaleX(0.9922);">Copy</span>
<span class="t" style="left:67.76px;top:105.00px;font-size:12px;transform:scaleX(0.9883);">Format Painter</span>
<span class="t" style="left:45.20px;top:128.00px;font-size:12px;transform:scaleX(1.0012);color:#666;">Clipboard</span>
<span class="t" style="left:170.75px;top:93.00px;font-size:12px;transform:scaleX(1.0048);">New</span>
<span class="t" style="left:165.61px;top:109.00px;font-size:12px;transform:scaleX(0.9743);">Slide</span>
<span class="t" style="left:225.85px;top:59.00px;font-size:12px;transform:scaleX(0.9973);">Layout</span>
<span class="t" style="left:225.95px;top:82.00px;font-size:12px;transform:scaleX(0.8907);">Reset</span>
<span class="t" style="left:226.01px;top:105.00px;font-size:12px;transform:scaleX(0.9806);">Section</span>
<span class="t" style="left:205.94px;top:128.00px;font-size:12px;transform:scaleX(0.9124);color:#666;">Slides</span>
<span class="t" style="left:395.60px;top:66.80px;font-size:12px;transform:scaleX(0.8907);color:#a3a3a3;">54</span>
<span class="t" style="left:295.02px;top:96.75px;font-size:12.5px;transform:scaleX(0.9740);color:#a3a3a3;font-weight:bold;">B</span>
<span class="t" style="left:318.24px;top:96.00px;font-size:13px;transform:scaleX(1.1956);color:#a3a3a3;font-weight:bold;font-style:italic;font-family:&quot;Liberation Serif&quot;, serif;">I</span>
<span class="t" style="left:339.16px;top:96.75px;font-size:12.5px;transform:scaleX(0.9801);color:#a3a3a3;font-weight:bold;">U</span>
<span class="t" style="left:362.12px;top:96.00px;font-size:13px;transform:scaleX(0.8862);color:#a3a3a3;font-weight:bold;text-shadow:1px 1.5px 1.5px rgba(120,120,120,.55);">S</span>
<span class="t" style="left:380.60px;top:97.50px;font-size:11px;transform:scaleX(0.8805);color:#a3a3a3;">abc</span>
<span class="t" style="left:403.00px;top:95.75px;font-size:10.5px;transform:scaleX(1.0587);color:#a3a3a3;">AV</span>
<span class="t" style="left:435.10px;top:96.00px;font-size:13px;transform:scaleX(0.9572);color:#a3a3a3;">Aa</span>
<span class="t" style="left:480.30px;top:94.80px;font-size:15px;transform:scaleX(0.9625);color:#a3a3a3;">A</span>
<span class="t" style="left:439.60px;top:66.55px;font-size:13.5px;transform:scaleX(0.9812);color:#a3a3a3;">A</span>
<span class="t" style="left:462.40px;top:68.55px;font-size:10.5px;transform:scaleX(1.0286);color:#a3a3a3;">A</span>
<span class="t" style="left:377.84px;top:128.00px;font-size:12px;transform:scaleX(1.0053);color:#666;">Font</span>
<span class="t" style="left:733.45px;top:59.00px;font-size:12px;transform:scaleX(1.0018);color:#a3a3a3;">Text Direction</span>
<span class="t" style="left:733.70px;top:82.00px;font-size:12px;transform:scaleX(1.0069);color:#a3a3a3;">Align Text</span>
<span class="t" style="left:733.10px;top:105.00px;font-size:12px;transform:scaleX(1.0024);color:#a3a3a3;">Convert to SmartArt</span>
<span class="t" style="left:650.79px;top:128.00px;font-size:12px;transform:scaleX(0.9574);color:#666;">Paragraph</span>
<span class="t" style="left:1006.40px;top:93.00px;font-size:12px;transform:scaleX(0.9913);">Arrange</span>
<span class="t" style="left:1056.95px;top:93.00px;font-size:12px;transform:scaleX(1.0042);color:#a3a3a3;">Quick</span>
<span class="t" style="left:1052.73px;top:109.00px;font-size:12px;transform:scaleX(0.9409);color:#a3a3a3;">Styles</span>
<span class="t" style="left:1115.72px;top:59.00px;font-size:12px;transform:scaleX(0.9502);color:#a3a3a3;">Shape Fill</span>
<span class="t" style="left:1115.71px;top:82.00px;font-size:12px;transform:scaleX(0.9836);color:#a3a3a3;">Shape Outline</span>
<span class="t" style="left:1115.73px;top:105.00px;font-size:12px;transform:scaleX(0.9471);color:#a3a3a3;">Shape Effects</span>
<span class="t" style="left:1002.74px;top:128.00px;font-size:12px;transform:scaleX(1.0085);color:#666;">Drawing</span>
<span class="t" style="left:1233.74px;top:59.00px;font-size:12px;transform:scaleX(1.0060);">Find</span>
<span class="t" style="left:1233.80px;top:82.00px;font-size:12px;transform:scaleX(0.9470);">Replace</span>
<span class="t" style="left:1234.23px;top:105.00px;font-size:12px;transform:scaleX(0.9308);">Select</span>
<span class="t" style="left:1234.73px;top:128.00px;font-size:12px;transform:scaleX(1.0166);color:#666;">Editing</span>
<span class="t" style="left:7.78px;top:710.50px;font-size:11px;transform:scaleX(0.9386);color:#fff;">SLIDE 1 OF 29</span>
<span class="t" style="left:128.45px;top:710.50px;font-size:11px;transform:scaleX(0.9462);color:#fff;">ENGLISH (UNITED KINGDOM)</span>
<span class="t" style="left:1305.55px;top:710.50px;font-size:11px;transform:scaleX(0.9913);color:#fff;">40%</span>
<span class="t" style="left:1304.25px;top:734.80px;font-size:12px;transform:scaleX(0.9149);color:#fff;">21:41</span>
<span class="t" style="left:1288.26px;top:751.60px;font-size:12px;transform:scaleX(0.9749);color:#fff;">08/04/2020</span>
<span class="t" style="left:1257.12px;top:743.00px;font-size:11px;transform:scaleX(1.0800);color:#fff;font-family:&quot;Liberation Sans&quot;, &quot;DejaVu Sans&quot;, sans-serif;">فا</span>
<span class="t" style="left:1330.13px;top:240.75px;font-size:15.5px;transform:scaleX(0.9600);color:#d24726;">1</span>
<span class="t" style="left:1165.13px;top:240.75px;font-size:15.5px;transform:scaleX(0.9600);color:#505050;">2</span>
<span class="t" style="left:1000.13px;top:240.75px;font-size:15.5px;transform:scaleX(0.9600);color:#505050;">3</span>
<span class="t" style="left:834.89px;top:240.75px;font-size:15.5px;transform:scaleX(0.9600);color:#505050;">4</span>
<span class="t" style="left:670.13px;top:240.75px;font-size:15.5px;transform:scaleX(0.9600);color:#505050;">5</span>
<span class="t" style="left:505.13px;top:240.75px;font-size:15.5px;transform:scaleX(0.9600);color:#505050;">6</span>
<span class="t" style="left:340.13px;top:240.75px;font-size:15.5px;transform:scaleX(0.9600);color:#505050;">7</span>
<span class="t" style="left:175.13px;top:240.75px;font-size:15.5px;transform:scaleX(0.9600);color:#505050;">8</span>
<span class="t" style="left:1330.13px;top:365.75px;font-size:15.5px;transform:scaleX(0.9600);color:#505050;">9</span>
<span class="t" style="left:1156.62px;top:365.75px;font-size:15.5px;transform:scaleX(0.9600);color:#505050;">10</span>
<span class="t" style="left:992.96px;top:365.75px;font-size:15.5px;transform:scaleX(0.9600);color:#505050;">11</span>
<span class="t" style="left:826.85px;top:365.75px;font-size:15.5px;transform:scaleX(0.9600);color:#505050;">12</span>
<span class="t" style="left:661.85px;top:365.75px;font-size:15.5px;transform:scaleX(0.9600);color:#505050;">13</span>
<span class="t" style="left:496.62px;top:365.75px;font-size:15.5px;transform:scaleX(0.9600);color:#505050;">14</span>
<span class="t" style="left:331.85px;top:365.75px;font-size:15.5px;transform:scaleX(0.9600);color:#505050;">15</span>
<span class="t" style="left:166.85px;top:365.75px;font-size:15.5px;transform:scaleX(0.9600);color:#505050;">16</span>
<span class="t" style="left:1321.85px;top:490.75px;font-size:15.5px;transform:scaleX(0.9600);color:#505050;">17</span>
<span class="t" style="left:1156.85px;top:490.75px;font-size:15.5px;transform:scaleX(0.9600);color:#505050;">18</span>
<span class="t" style="left:991.85px;top:490.75px;font-size:15.5px;transform:scaleX(0.9600);color:#505050;">19</span>
<span class="t" style="left:826.62px;top:490.75px;font-size:15.5px;transform:scaleX(0.9600);color:#505050;">20</span>
<span class="t" style="left:661.85px;top:490.75px;font-size:15.5px;transform:scaleX(0.9600);color:#505050;">21</span>
<span class="t" style="left:496.85px;top:490.75px;font-size:15.5px;transform:scaleX(0.9600);color:#505050;">22</span>
<span class="t" style="left:331.85px;top:490.75px;font-size:15.5px;transform:scaleX(0.9600);color:#505050;">23</span>
<span class="t" style="left:166.62px;top:490.75px;font-size:15.5px;transform:scaleX(0.9600);color:#505050;">24</span>
<span class="t" style="left:1321.85px;top:615.75px;font-size:15.5px;transform:scaleX(0.9600);color:#505050;">25</span>
<span class="t" style="left:1156.85px;top:615.75px;font-size:15.5px;transform:scaleX(0.9600);color:#505050;">26</span>
<span class="t" style="left:991.85px;top:615.75px;font-size:15.5px;transform:scaleX(0.9600);color:#505050;">27</span>
<span class="t" style="left:826.85px;top:615.75px;font-size:15.5px;transform:scaleX(0.9600);color:#505050;">28</span>
<span class="t" style="left:661.85px;top:615.75px;font-size:15.5px;transform:scaleX(0.9600);color:#505050;">29</span>
</div>
</body>
</html>
